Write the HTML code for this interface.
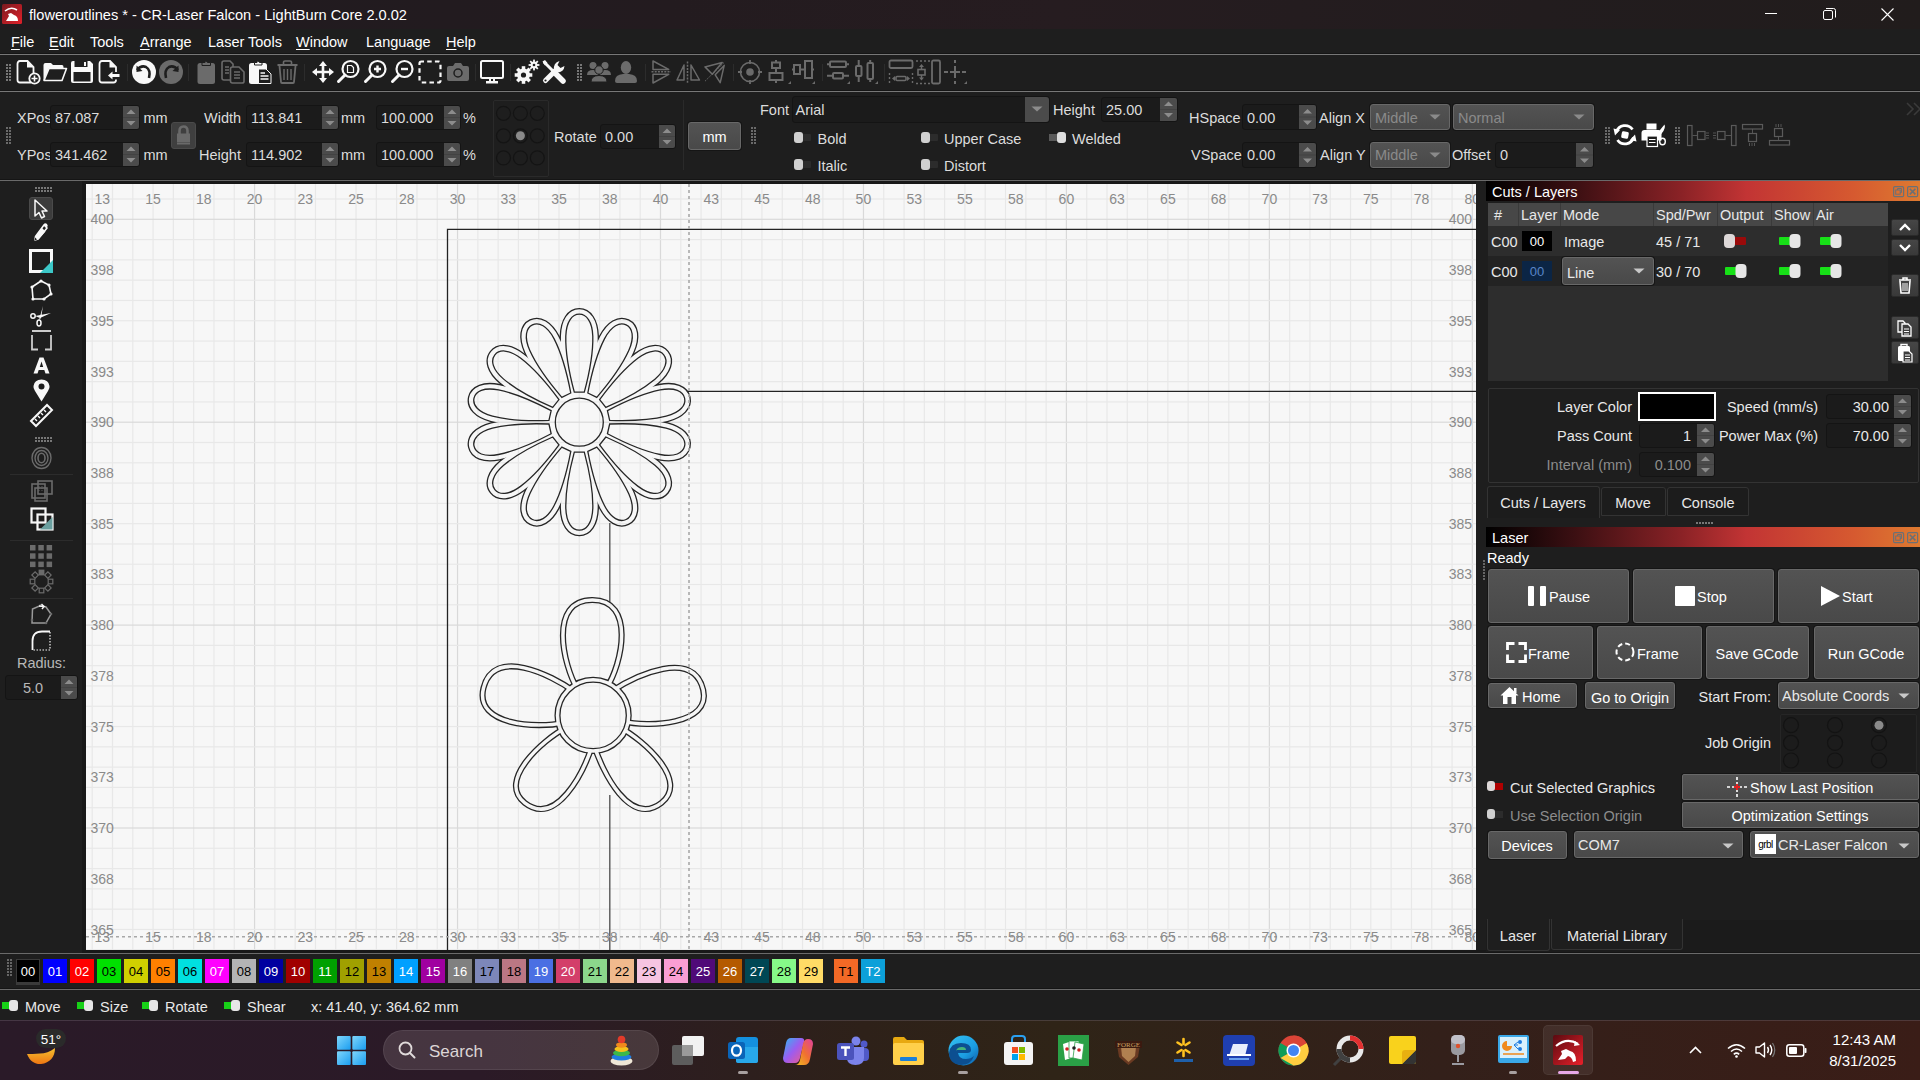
<!DOCTYPE html><html><head><meta charset="utf-8"><style>
html,body{margin:0;padding:0;width:1920px;height:1080px;overflow:hidden;background:#1e1e1e;font-family:"Liberation Sans",sans-serif;}
.a{position:absolute;box-sizing:border-box;}
svg.a{overflow:visible}
.t{position:absolute;white-space:nowrap;line-height:normal;}
u{text-decoration:underline;text-decoration-thickness:1px;text-underline-offset:1.5px;}
</style></head><body>
<div class="a" style="left:0px;top:0px;width:1920px;height:29px;background:linear-gradient(90deg,#201b1f 0%,#231b1f 35%,#261c20 55%,#221c1e 80%,#211c1c 100%)"></div>
<svg class="a" style="left:2px;top:4px;" width="20" height="20" viewBox="0 0 20 20"><defs><linearGradient id="ig" x1="0" y1="0" x2="1" y2="1"><stop offset="0" stop-color="#7a1a1f"/><stop offset="1" stop-color="#e0202a"/></linearGradient></defs><rect width="20" height="20" rx="1.5" fill="url(#ig)"/><path d="M3 7 Q9 2 15 6" stroke="#fff" stroke-width="1.6" fill="none"/><path d="M4 17 L7 12 L6 10 L9 9 L12 11 Q16 12 16 17 Z" fill="#fff"/></svg>
<div class="t" style="left:29.0px;top:6.8px;font-size:14.6px;color:#ffffff;">floweroutlines * - CR-Laser Falcon - LightBurn Core 2.0.02</div>
<svg class="a" style="left:1765px;top:13px;" width="12" height="1" viewBox="0 0 12 1"><rect width="12" height="1" fill="#fff"/></svg>
<svg class="a" style="left:1823px;top:8px;" width="13" height="13" viewBox="0 0 13 13"><rect x="0.5" y="2.5" width="9" height="9" rx="1.5" fill="none" stroke="#fff" stroke-width="1"/><path d="M3 0.5 H10.5 Q12.5 0.5 12.5 2.5 V9.5" fill="none" stroke="#fff" stroke-width="1"/></svg>
<svg class="a" style="left:1881px;top:8px;" width="13" height="13" viewBox="0 0 13 13"><path d="M0.5 0.5 L12.5 12.5 M12.5 0.5 L0.5 12.5" stroke="#fff" stroke-width="1.1"/></svg>
<div class="t" style="left:11.0px;top:33.9px;font-size:14.5px;color:#ffffff;"><u>F</u>ile</div>
<div class="t" style="left:49.0px;top:33.9px;font-size:14.5px;color:#ffffff;"><u>E</u>dit</div>
<div class="t" style="left:90.0px;top:33.9px;font-size:14.5px;color:#ffffff;">Tools</div>
<div class="t" style="left:140.0px;top:33.9px;font-size:14.5px;color:#ffffff;"><u>A</u>rrange</div>
<div class="t" style="left:208.0px;top:33.9px;font-size:14.5px;color:#ffffff;">Laser Tools</div>
<div class="t" style="left:296.0px;top:33.9px;font-size:14.5px;color:#ffffff;"><u>W</u>indow</div>
<div class="t" style="left:366.0px;top:33.9px;font-size:14.5px;color:#ffffff;">Language</div>
<div class="t" style="left:446.0px;top:33.9px;font-size:14.5px;color:#ffffff;"><u>H</u>elp</div>
<div class="a" style="left:0px;top:53px;width:1920px;height:1px;background:#151515"></div>
<div class="a" style="left:0px;top:54px;width:1920px;height:1px;background:#777"></div>
<div class="a" style="left:0px;top:90px;width:1920px;height:1px;background:#151515"></div>
<div class="a" style="left:0px;top:91px;width:1920px;height:1px;background:#777"></div>
<svg class="a" style="left:6px;top:64px;" width="6" height="18" viewBox="0 0 6 18"><rect x="0" y="0" width="2" height="2" fill="#777"/><rect x="3" y="0" width="2" height="2" fill="#777"/><rect x="0" y="3" width="2" height="2" fill="#777"/><rect x="3" y="3" width="2" height="2" fill="#777"/><rect x="0" y="6" width="2" height="2" fill="#777"/><rect x="3" y="6" width="2" height="2" fill="#777"/><rect x="0" y="9" width="2" height="2" fill="#777"/><rect x="3" y="9" width="2" height="2" fill="#777"/><rect x="0" y="12" width="2" height="2" fill="#777"/><rect x="3" y="12" width="2" height="2" fill="#777"/><rect x="0" y="15" width="2" height="2" fill="#777"/><rect x="3" y="15" width="2" height="2" fill="#777"/></svg>
<svg class="a" style="left:16px;top:60px;" width="24" height="24" viewBox="0 0 24 24"><path d="M1.5 4 Q1.5 1 4 1 H11.5 L17.5 7 V15 M15 22.5 H4 Q1.5 22.5 1.5 20 V4" fill="none" stroke="#f8f8f8" stroke-width="1.8"/><path d="M11 1 V7.5 H17.5 Z" fill="#f8f8f8"/><circle cx="18.5" cy="18.5" r="5.2" fill="#1e1e1e" stroke="#f8f8f8" stroke-width="1.8"/><path d="M18.5 15.5 V21.5 M15.5 18.5 H21.5" stroke="#f8f8f8" stroke-width="1.6"/></svg>
<svg class="a" style="left:43px;top:60px;" width="24" height="24" viewBox="0 0 24 24"><path d="M0.5 5 Q0.5 3 2.5 3 H8 L10 5 H19 Q20.5 5 20.5 7 V8 H6 L1 20 H0.5 Z" fill="#f8f8f8"/><path d="M6 8.5 H23.5 L19 20.5 H1 Z" fill="none" stroke="#f8f8f8" stroke-width="1.6" stroke-linejoin="round"/></svg>
<svg class="a" style="left:70px;top:60px;" width="24" height="24" viewBox="0 0 24 24"><path d="M1 3 Q1 1 3 1 H20 L23 4 V21 Q23 23 21 23 H3 Q1 23 1 21 Z" fill="#f8f8f8"/><rect x="4.5" y="1" width="13" height="6" fill="#1e1e1e"/><rect x="14" y="2" width="2" height="4" fill="#f8f8f8"/><rect x="3.5" y="12" width="17" height="9.5" fill="#1e1e1e"/></svg>
<svg class="a" style="left:98px;top:60px;" width="24" height="24" viewBox="0 0 24 24"><path d="M1.5 4 Q1.5 1 4 1 H12 L18 7 V12 M18 19.5 V20 Q18 22.5 15.5 22.5 H4 Q1.5 22.5 1.5 20 V4" fill="none" stroke="#f8f8f8" stroke-width="1.8"/><path d="M11.5 1 V7.5 H18 Z" fill="#f8f8f8"/><path d="M10 15.5 L14.5 11.5 V14 H21.5 V17 H14.5 V19.5 Z" fill="#f8f8f8"/></svg>
<div class="a" style="left:127px;top:64px;width:1px;height:17px;background:#2c2c2c"></div>
<svg class="a" style="left:132px;top:60px;" width="24" height="24" viewBox="0 0 24 24"><circle cx="12" cy="12" r="12" fill="#f8f8f8"/><path d="M5 10 Q9 5 14 7 Q19 10 17 18" fill="none" stroke="#1e1e1e" stroke-width="2.6"/><path d="M4.5 5.5 L4.5 12 L10.5 11 Z" fill="#1e1e1e"/></svg>
<svg class="a" style="left:159px;top:60px;" width="24" height="24" viewBox="0 0 24 24"><circle cx="12" cy="12" r="12" fill="#6b6b6b"/><path d="M19 10 Q15 5 10 7 Q5 10 7 18" fill="none" stroke="#1e1e1e" stroke-width="2.6"/><path d="M19.5 5.5 L19.5 12 L13.5 11 Z" fill="#1e1e1e"/></svg>
<div class="a" style="left:188px;top:64px;width:1px;height:17px;background:#2c2c2c"></div>
<svg class="a" style="left:197px;top:60px;" width="24" height="24" viewBox="0 0 24 24"><rect x="0.5" y="3" width="17.5" height="21" rx="2.5" fill="#6b6b6b"/><path d="M5 5.5 V2.5 H8 Q9 0 10.5 2.5 H13.5 V5.5 Z" fill="#6b6b6b" stroke="#1e1e1e" stroke-width="1"/></svg>
<svg class="a" style="left:221px;top:60px;" width="24" height="24" viewBox="0 0 24 24"><path d="M1 3 Q1 1 3 1 H9 L12 4 V7 M10 20 H3 Q1 20 1 18 V3" fill="none" stroke="#6b6b6b" stroke-width="1.6"/><path d="M9.5 9 Q9.5 7 11.5 7 H18 L23 12 V21.5 Q23 23 21 23 H11.5 Q9.5 23 9.5 21 Z" fill="none" stroke="#6b6b6b" stroke-width="1.6"/><path d="M4 7 H8 M4 10 H8 M4 13 H8 M13 12 H19 M13 15 H19 M13 18 H19" stroke="#6b6b6b" stroke-width="1.4"/></svg>
<svg class="a" style="left:249px;top:60px;" width="24" height="24" viewBox="0 0 24 24"><rect x="0" y="3" width="18" height="21" rx="2.5" fill="#f8f8f8"/><path d="M5.5 5 V2.5 H8 Q9 0 10.5 2.5 H13 V5 Z" fill="#f8f8f8" stroke="#1e1e1e" stroke-width="1"/><path d="M9.5 9 H17 L22 14 V23.5 H9.5 Z" fill="#1e1e1e" stroke="#f8f8f8" stroke-width="1"/><path d="M11.5 13 H16 M11.5 16 H19.5 M11.5 19 H19.5" stroke="#f8f8f8" stroke-width="1.4"/></svg>
<svg class="a" style="left:277px;top:60px;" width="24" height="24" viewBox="0 0 24 24"><path d="M0.5 5 H20.5" stroke="#6b6b6b" stroke-width="2"/><path d="M6.5 4.5 V2 Q6.5 1 8 1 H13 Q14.5 1 14.5 2 V4.5" fill="none" stroke="#6b6b6b" stroke-width="1.6"/><path d="M2.5 6 L4 22 Q4 23 5 23 H16 Q17 23 17 22 L18.5 6" fill="none" stroke="#6b6b6b" stroke-width="1.8"/><path d="M7 9 V20 M10.5 9 V20 M14 9 V20" stroke="#6b6b6b" stroke-width="1.4"/></svg>
<div class="a" style="left:304px;top:64px;width:1px;height:17px;background:#2c2c2c"></div>
<svg class="a" style="left:311px;top:60px;" width="24" height="24" viewBox="0 0 24 24"><path d="M12 1 L16 6 H13.3 V10.7 H18 V8 L23 12 L18 16 V13.3 H13.3 V18 H16 L12 23 L8 18 H10.7 V13.3 H6 V16 L1 12 L6 8 V10.7 H10.7 V6 H8 Z" fill="#f8f8f8"/></svg>
<svg class="a" style="left:337px;top:60px;" width="24" height="24" viewBox="0 0 24 24"><circle cx="13.5" cy="9" r="8" fill="none" stroke="#f8f8f8" stroke-width="2.2"/><path d="M8 15 L1.5 21.5" stroke="#f8f8f8" stroke-width="3" stroke-linecap="round"/><path d="M10.5 5.5 H14.5 L16.5 7.5 V12.5 H10.5 Z" fill="none" stroke="#f8f8f8" stroke-width="1.2"/></svg>
<svg class="a" style="left:364px;top:60px;" width="24" height="24" viewBox="0 0 24 24"><circle cx="13.5" cy="9" r="8" fill="none" stroke="#f8f8f8" stroke-width="2.2"/><path d="M8 15 L1.5 21.5" stroke="#f8f8f8" stroke-width="3" stroke-linecap="round"/><path d="M13.5 5.5 V12.5 M10 9 H17" stroke="#f8f8f8" stroke-width="2.4"/></svg>
<svg class="a" style="left:391px;top:60px;" width="24" height="24" viewBox="0 0 24 24"><circle cx="13.5" cy="9" r="8" fill="none" stroke="#f8f8f8" stroke-width="2.2"/><path d="M8 15 L1.5 21.5" stroke="#f8f8f8" stroke-width="3" stroke-linecap="round"/><path d="M10 9 H17" stroke="#f8f8f8" stroke-width="2.4"/></svg>
<svg class="a" style="left:418px;top:60px;" width="24" height="24" viewBox="0 0 24 24"><rect x="1.5" y="1.5" width="21" height="21" rx="2" fill="none" stroke="#f8f8f8" stroke-width="2.2" stroke-dasharray="4.5 3.2" stroke-dashoffset="2"/></svg>
<svg class="a" style="left:446px;top:60px;" width="24" height="24" viewBox="0 0 24 24"><path d="M1 8 Q1 6 3 6 H7 L9 3 H15 L17 6 H21 Q23 6 23 8 V19 Q23 21 21 21 H3 Q1 21 1 19 Z" fill="#6b6b6b"/><circle cx="12" cy="13" r="4" fill="none" stroke="#1e1e1e" stroke-width="1.5"/></svg>
<div class="a" style="left:475px;top:64px;width:1px;height:17px;background:#2c2c2c"></div>
<svg class="a" style="left:480px;top:60px;" width="24" height="24" viewBox="0 0 24 24"><rect x="1" y="1" width="22" height="17" rx="1.5" fill="none" stroke="#f8f8f8" stroke-width="2"/><path d="M10 18 V21 M14 18 V21" stroke="#f8f8f8" stroke-width="2"/><rect x="6" y="21" width="12" height="2.5" fill="#f8f8f8"/></svg>
<div class="a" style="left:510px;top:64px;width:1px;height:17px;background:#2c2c2c"></div>
<svg class="a" style="left:515px;top:60px;" width="24" height="24" viewBox="0 0 24 24"><rect x="6.75" y="6.2" width="3.5" height="7" fill="#f8f8f8" transform="rotate(0.0 8.5 15)"/><rect x="6.75" y="6.2" width="3.5" height="7" fill="#f8f8f8" transform="rotate(45.0 8.5 15)"/><rect x="6.75" y="6.2" width="3.5" height="7" fill="#f8f8f8" transform="rotate(90.0 8.5 15)"/><rect x="6.75" y="6.2" width="3.5" height="7" fill="#f8f8f8" transform="rotate(135.0 8.5 15)"/><rect x="6.75" y="6.2" width="3.5" height="7" fill="#f8f8f8" transform="rotate(180.0 8.5 15)"/><rect x="6.75" y="6.2" width="3.5" height="7" fill="#f8f8f8" transform="rotate(225.0 8.5 15)"/><rect x="6.75" y="6.2" width="3.5" height="7" fill="#f8f8f8" transform="rotate(270.0 8.5 15)"/><rect x="6.75" y="6.2" width="3.5" height="7" fill="#f8f8f8" transform="rotate(315.0 8.5 15)"/><circle cx="8.5" cy="15" r="6.5" fill="#f8f8f8"/><circle cx="8.5" cy="15" r="2.6" fill="#1e1e1e"/><rect x="18.1" y="-0.40000000000000013" width="1.8" height="3.6" fill="#f8f8f8" transform="rotate(0.0 19 5)"/><rect x="18.1" y="-0.40000000000000013" width="1.8" height="3.6" fill="#f8f8f8" transform="rotate(45.0 19 5)"/><rect x="18.1" y="-0.40000000000000013" width="1.8" height="3.6" fill="#f8f8f8" transform="rotate(90.0 19 5)"/><rect x="18.1" y="-0.40000000000000013" width="1.8" height="3.6" fill="#f8f8f8" transform="rotate(135.0 19 5)"/><rect x="18.1" y="-0.40000000000000013" width="1.8" height="3.6" fill="#f8f8f8" transform="rotate(180.0 19 5)"/><rect x="18.1" y="-0.40000000000000013" width="1.8" height="3.6" fill="#f8f8f8" transform="rotate(225.0 19 5)"/><rect x="18.1" y="-0.40000000000000013" width="1.8" height="3.6" fill="#f8f8f8" transform="rotate(270.0 19 5)"/><rect x="18.1" y="-0.40000000000000013" width="1.8" height="3.6" fill="#f8f8f8" transform="rotate(315.0 19 5)"/><circle cx="19" cy="5" r="3.4" fill="#f8f8f8"/><circle cx="19" cy="5" r="1.3" fill="#1e1e1e"/></svg>
<svg class="a" style="left:542px;top:60px;" width="24" height="24" viewBox="0 0 24 24"><path d="M2.5 2.5 L13 13" stroke="#f8f8f8" stroke-width="3" stroke-linecap="round"/><path d="M0.5 1.5 L3 0 L5.5 3 L3 5.5 Z" fill="#f8f8f8"/><path d="M12 12 L21 21" stroke="#f8f8f8" stroke-width="5.5" stroke-linecap="round"/><path d="M3.5 20.5 L14 10" stroke="#f8f8f8" stroke-width="5" stroke-linecap="round"/><path d="M12 10 Q11 3 17.5 1 L15.5 5 L18.5 8 L22.5 6 Q22 12 15 12.5 Z" fill="#f8f8f8"/><circle cx="3.5" cy="20.5" r="1.1" fill="#1e1e1e"/></svg>
<svg class="a" style="left:577px;top:64px;" width="6" height="18" viewBox="0 0 6 18"><rect x="0" y="0" width="2" height="2" fill="#777"/><rect x="3" y="0" width="2" height="2" fill="#777"/><rect x="0" y="3" width="2" height="2" fill="#777"/><rect x="3" y="3" width="2" height="2" fill="#777"/><rect x="0" y="6" width="2" height="2" fill="#777"/><rect x="3" y="6" width="2" height="2" fill="#777"/><rect x="0" y="9" width="2" height="2" fill="#777"/><rect x="3" y="9" width="2" height="2" fill="#777"/><rect x="0" y="12" width="2" height="2" fill="#777"/><rect x="3" y="12" width="2" height="2" fill="#777"/><rect x="0" y="15" width="2" height="2" fill="#777"/><rect x="3" y="15" width="2" height="2" fill="#777"/></svg>
<svg class="a" style="left:587px;top:60px;" width="24" height="24" viewBox="0 0 24 24"><circle cx="6" cy="5.5" r="3.5" fill="#6b6b6b"/><circle cx="18" cy="5.5" r="3.5" fill="#6b6b6b"/><path d="M0 15 Q0 10 6 10 Q10 10 11 13 L11 15 Z" fill="#6b6b6b"/><path d="M24 15 Q24 10 18 10 Q14 10 13 13 L13 15 Z" fill="#6b6b6b"/><circle cx="12" cy="10" r="4.2" fill="#6b6b6b" stroke="#1e1e1e" stroke-width="1"/><path d="M4 22 Q4 15.5 12 15.5 Q20 15.5 20 22 Z" fill="#6b6b6b" stroke="#1e1e1e" stroke-width="1"/></svg>
<svg class="a" style="left:615px;top:60px;" width="24" height="24" viewBox="0 0 24 24"><ellipse cx="11" cy="7.5" rx="5.2" ry="6.5" fill="#6b6b6b"/><path d="M0 21 Q0 14.5 8 14 H14 Q22 14.5 22 21 Q22 23 20 23 H2 Q0 23 0 21 Z" fill="#6b6b6b"/></svg>
<div class="a" style="left:645px;top:64px;width:1px;height:17px;background:#2c2c2c"></div>
<svg class="a" style="left:652px;top:60px;" width="24" height="24" viewBox="0 0 24 24"><path d="M1 1 L16.7 9.4 H1 Z M1 14.3 H16.7 L1 23 Z" fill="none" stroke="#6b6b6b" stroke-width="1.5" stroke-linejoin="round"/><path d="M-0.5 11.8 H19" stroke="#6b6b6b" stroke-width="1.5" stroke-dasharray="2 1.2"/></svg>
<svg class="a" style="left:677px;top:60px;" width="24" height="24" viewBox="0 0 24 24"><path d="M0 20 L7 5 V20 Z M14 5 V20 H22.5 Z" fill="none" stroke="#6b6b6b" stroke-width="1.5" stroke-linejoin="round"/><path d="M10.5 1.5 V23" stroke="#6b6b6b" stroke-width="1.5" stroke-dasharray="2 1.2"/></svg>
<svg class="a" style="left:705px;top:60px;" width="24" height="24" viewBox="0 0 24 24"><path d="M0 6.9 L17.2 2.4 L7.3 14.3 Z M19.2 5.4 L15.2 22.7 L10.2 14.8 Z" fill="none" stroke="#6b6b6b" stroke-width="1.5" stroke-linejoin="round"/><path d="M0 21.2 L19.7 1.9" stroke="#6b6b6b" stroke-width="0.9" stroke-dasharray="1.5 1"/></svg>
<div class="a" style="left:733px;top:64px;width:1px;height:17px;background:#2c2c2c"></div>
<svg class="a" style="left:738px;top:60px;" width="24" height="24" viewBox="0 0 24 24"><circle cx="12" cy="12" r="9.5" fill="none" stroke="#6b6b6b" stroke-width="1.6"/><circle cx="12" cy="12" r="3.8" fill="#6b6b6b"/><path d="M12 0 V4 M12 20 V24 M0 12 H4 M20 12 H24" stroke="#6b6b6b" stroke-width="1.8"/></svg>
<svg class="a" style="left:768px;top:60px;" width="24" height="24" viewBox="0 0 24 24"><rect x="4" y="2.5" width="8" height="5.5" fill="none" stroke="#6b6b6b" stroke-width="2"/><rect x="1.5" y="13" width="13" height="7" fill="none" stroke="#6b6b6b" stroke-width="2"/><path d="M8 0 V2.5 M8 8 V13 M8 20 V23" stroke="#6b6b6b" stroke-width="2"/><path d="M20 24 L23 21 V24 Z" fill="#6b6b6b"/></svg>
<svg class="a" style="left:792px;top:60px;" width="24" height="24" viewBox="0 0 24 24"><rect x="2" y="5" width="6" height="9" fill="none" stroke="#6b6b6b" stroke-width="2"/><rect x="13" y="1" width="7" height="17" fill="none" stroke="#6b6b6b" stroke-width="2"/><path d="M0 9.5 H2 M8 9.5 H13 M20 9.5 H22" stroke="#6b6b6b" stroke-width="2"/><path d="M20 24 L23 21 V24 Z" fill="#6b6b6b"/></svg>
<div class="a" style="left:822px;top:64px;width:1px;height:17px;background:#2c2c2c"></div>
<svg class="a" style="left:827px;top:60px;" width="24" height="24" viewBox="0 0 24 24"><rect x="3" y="1.5" width="16" height="5.5" rx="1" fill="none" stroke="#6b6b6b" stroke-width="2"/><rect x="6" y="13" width="10" height="5.5" rx="1" fill="none" stroke="#6b6b6b" stroke-width="2"/><path d="M0 4.2 H3 M19 4.2 H22 M0 15.7 H6 M16 15.7 H22" stroke="#6b6b6b" stroke-width="2"/><path d="M20 24 L23 21 V24 Z" fill="#6b6b6b"/></svg>
<svg class="a" style="left:855px;top:60px;" width="24" height="24" viewBox="0 0 24 24"><rect x="1" y="6" width="5.5" height="10" rx="1" fill="none" stroke="#6b6b6b" stroke-width="2"/><rect x="12.5" y="3" width="5.5" height="16" rx="1" fill="none" stroke="#6b6b6b" stroke-width="2"/><path d="M3.7 0 V6 M3.7 16 V22 M15.2 0 V3 M15.2 19 V22" stroke="#6b6b6b" stroke-width="2"/><path d="M20 24 L23 21 V24 Z" fill="#6b6b6b"/></svg>
<div class="a" style="left:884px;top:64px;width:1px;height:17px;background:#2c2c2c"></div>
<svg class="a" style="left:889px;top:60px;" width="24" height="24" viewBox="0 0 24 24"><rect x="0.5" y="0.5" width="23" height="7.5" rx="1.5" fill="none" stroke="#6b6b6b" stroke-width="1.8"/><path d="M0.5 13 V24 M23.5 13 V24" stroke="#6b6b6b" stroke-width="1.4" stroke-dasharray="2 2"/><path d="M3 18.5 L6 16 V21 Z M21 18.5 L18 16 V21 Z" fill="#6b6b6b"/><rect x="7" y="16.5" width="10" height="4" rx="1" fill="none" stroke="#6b6b6b" stroke-width="1.6"/></svg>
<svg class="a" style="left:916px;top:60px;" width="16" height="24" viewBox="0 0 16 24"><path d="M0 1 H16 M0 23.5 H16" stroke="#6b6b6b" stroke-width="1.4" stroke-dasharray="2 2"/><path d="M5.5 4 L3 7 H8 Z M5.5 20.5 L3 17.5 H8 Z" fill="#6b6b6b"/><path d="M5.5 6 V10 M5.5 15 V19" stroke="#6b6b6b" stroke-width="1.4"/><rect x="2" y="9.5" width="7" height="5.5" fill="none" stroke="#6b6b6b" stroke-width="1.6"/></svg>
<svg class="a" style="left:931px;top:60px;" width="10" height="24" viewBox="0 0 10 24"><rect x="1" y="0.5" width="8" height="23" rx="1.5" fill="none" stroke="#6b6b6b" stroke-width="1.8"/></svg>
<svg class="a" style="left:944px;top:60px;" width="24" height="24" viewBox="0 0 24 24"><path d="M11 0 V3 M11 6 V18 M11 21 V24 M0 12 H4 M6 12 H16 M18 12 H22" stroke="#6b6b6b" stroke-width="2"/><path d="M20 24 L23 21 V24 Z" fill="#6b6b6b"/></svg>
<div class="a" style="left:0px;top:92px;width:1920px;height:88px;background:#1e1e1e"></div>
<svg class="a" style="left:6px;top:127px;" width="6" height="18" viewBox="0 0 6 18"><rect x="0" y="0" width="2" height="2" fill="#6a6a6a"/><rect x="3" y="0" width="2" height="2" fill="#6a6a6a"/><rect x="0" y="3" width="2" height="2" fill="#6a6a6a"/><rect x="3" y="3" width="2" height="2" fill="#6a6a6a"/><rect x="0" y="6" width="2" height="2" fill="#6a6a6a"/><rect x="3" y="6" width="2" height="2" fill="#6a6a6a"/><rect x="0" y="9" width="2" height="2" fill="#6a6a6a"/><rect x="3" y="9" width="2" height="2" fill="#6a6a6a"/><rect x="0" y="12" width="2" height="2" fill="#6a6a6a"/><rect x="3" y="12" width="2" height="2" fill="#6a6a6a"/><rect x="0" y="15" width="2" height="2" fill="#6a6a6a"/><rect x="3" y="15" width="2" height="2" fill="#6a6a6a"/></svg>
<div class="t" style="left:17.0px;top:109.9px;font-size:14.5px;color:#dcdcdc;">XPos</div>
<div class="a" style="left:50px;top:105px;width:90px;height:25px;background:#1b1b1b;border:1px solid #141414;border-radius:3px"></div>
<svg class="a" style="left:123px;top:106px;" width="16" height="23" viewBox="0 0 16 23"><path d="M0 0 H14 Q16 0 16 2 V21 Q16 23 14 23 H0 Z" fill="#4b4b4b"/><rect x="0" y="11.0" width="16" height="1" fill="#424242"/><path d="M3.5 8.0 L8.0 3.5 L12.5 8.0 Z" fill="#8c8c8c"/><path d="M3.5 15.0 L8.0 19.5 L12.5 15.0 Z" fill="#8c8c8c"/></svg>
<div class="t" style="left:55.0px;top:109.9px;font-size:14.5px;color:#dcdcdc;">87.087</div>
<div class="t" style="left:17.0px;top:146.9px;font-size:14.5px;color:#dcdcdc;">YPos</div>
<div class="a" style="left:50px;top:142px;width:90px;height:25px;background:#1b1b1b;border:1px solid #141414;border-radius:3px"></div>
<svg class="a" style="left:123px;top:143px;" width="16" height="23" viewBox="0 0 16 23"><path d="M0 0 H14 Q16 0 16 2 V21 Q16 23 14 23 H0 Z" fill="#4b4b4b"/><rect x="0" y="11.0" width="16" height="1" fill="#424242"/><path d="M3.5 8.0 L8.0 3.5 L12.5 8.0 Z" fill="#8c8c8c"/><path d="M3.5 15.0 L8.0 19.5 L12.5 15.0 Z" fill="#8c8c8c"/></svg>
<div class="t" style="left:55.0px;top:146.9px;font-size:14.5px;color:#dcdcdc;">341.462</div>
<div class="t" style="left:143.5px;top:109.9px;font-size:14.5px;color:#dcdcdc;">mm</div>
<div class="t" style="left:143.5px;top:146.9px;font-size:14.5px;color:#dcdcdc;">mm</div>
<div class="a" style="left:171px;top:122px;width:25px;height:27px;background:#3f3f3f;border:1px solid #4a4a4a;border-radius:3px"></div>
<svg class="a" style="left:176px;top:125px;" width="15" height="21" viewBox="0 0 15 21"><path d="M3.5 9 V6 Q3.5 1.5 7.5 1.5 Q11.5 1.5 11.5 6 V9" fill="none" stroke="#6a6a6a" stroke-width="2.6"/><rect x="1" y="8.5" width="13" height="11" fill="#6a6a6a"/><rect x="1" y="17" width="13" height="1" fill="#555"/></svg>
<div class="t" style="left:204.0px;top:109.9px;font-size:14.5px;color:#dcdcdc;">Width</div>
<div class="a" style="left:246px;top:105px;width:93px;height:25px;background:#1b1b1b;border:1px solid #141414;border-radius:3px"></div>
<svg class="a" style="left:322px;top:106px;" width="16" height="23" viewBox="0 0 16 23"><path d="M0 0 H14 Q16 0 16 2 V21 Q16 23 14 23 H0 Z" fill="#4b4b4b"/><rect x="0" y="11.0" width="16" height="1" fill="#424242"/><path d="M3.5 8.0 L8.0 3.5 L12.5 8.0 Z" fill="#8c8c8c"/><path d="M3.5 15.0 L8.0 19.5 L12.5 15.0 Z" fill="#8c8c8c"/></svg>
<div class="t" style="left:251.0px;top:109.9px;font-size:14.5px;color:#dcdcdc;">113.841</div>
<div class="t" style="left:199.0px;top:146.9px;font-size:14.5px;color:#dcdcdc;">Height</div>
<div class="a" style="left:246px;top:142px;width:93px;height:25px;background:#1b1b1b;border:1px solid #141414;border-radius:3px"></div>
<svg class="a" style="left:322px;top:143px;" width="16" height="23" viewBox="0 0 16 23"><path d="M0 0 H14 Q16 0 16 2 V21 Q16 23 14 23 H0 Z" fill="#4b4b4b"/><rect x="0" y="11.0" width="16" height="1" fill="#424242"/><path d="M3.5 8.0 L8.0 3.5 L12.5 8.0 Z" fill="#8c8c8c"/><path d="M3.5 15.0 L8.0 19.5 L12.5 15.0 Z" fill="#8c8c8c"/></svg>
<div class="t" style="left:251.0px;top:146.9px;font-size:14.5px;color:#dcdcdc;">114.902</div>
<div class="t" style="left:341.0px;top:109.9px;font-size:14.5px;color:#dcdcdc;">mm</div>
<div class="t" style="left:341.0px;top:146.9px;font-size:14.5px;color:#dcdcdc;">mm</div>
<div class="a" style="left:376px;top:105px;width:85px;height:25px;background:#1b1b1b;border:1px solid #141414;border-radius:3px"></div>
<svg class="a" style="left:444px;top:106px;" width="16" height="23" viewBox="0 0 16 23"><path d="M0 0 H14 Q16 0 16 2 V21 Q16 23 14 23 H0 Z" fill="#4b4b4b"/><rect x="0" y="11.0" width="16" height="1" fill="#424242"/><path d="M3.5 8.0 L8.0 3.5 L12.5 8.0 Z" fill="#8c8c8c"/><path d="M3.5 15.0 L8.0 19.5 L12.5 15.0 Z" fill="#8c8c8c"/></svg>
<div class="t" style="left:381.0px;top:109.9px;font-size:14.5px;color:#dcdcdc;">100.000</div>
<div class="a" style="left:376px;top:142px;width:85px;height:25px;background:#1b1b1b;border:1px solid #141414;border-radius:3px"></div>
<svg class="a" style="left:444px;top:143px;" width="16" height="23" viewBox="0 0 16 23"><path d="M0 0 H14 Q16 0 16 2 V21 Q16 23 14 23 H0 Z" fill="#4b4b4b"/><rect x="0" y="11.0" width="16" height="1" fill="#424242"/><path d="M3.5 8.0 L8.0 3.5 L12.5 8.0 Z" fill="#8c8c8c"/><path d="M3.5 15.0 L8.0 19.5 L12.5 15.0 Z" fill="#8c8c8c"/></svg>
<div class="t" style="left:381.0px;top:146.9px;font-size:14.5px;color:#dcdcdc;">100.000</div>
<div class="t" style="left:463.0px;top:109.9px;font-size:14.5px;color:#dcdcdc;">%</div>
<div class="t" style="left:463.0px;top:146.9px;font-size:14.5px;color:#dcdcdc;">%</div>
<div class="a" style="left:493px;top:100px;width:56px;height:77px;border:1px solid #2a2a2a;border-radius:2px"></div>
<svg class="a" style="left:493px;top:100px;" width="56" height="77" viewBox="0 0 56 77"><circle cx="10.5" cy="13.3" r="7" fill="none" stroke="#141414" stroke-width="1.2"/><circle cx="10.5" cy="35.8" r="7" fill="none" stroke="#141414" stroke-width="1.2"/><circle cx="10.5" cy="57.9" r="7" fill="none" stroke="#141414" stroke-width="1.2"/><circle cx="27.4" cy="13.3" r="7" fill="none" stroke="#141414" stroke-width="1.2"/><circle cx="27.4" cy="35.8" r="7" fill="none" stroke="#141414" stroke-width="1.2"/><circle cx="27.4" cy="57.9" r="7" fill="none" stroke="#141414" stroke-width="1.2"/><circle cx="44.3" cy="13.3" r="7" fill="none" stroke="#141414" stroke-width="1.2"/><circle cx="44.3" cy="35.8" r="7" fill="none" stroke="#141414" stroke-width="1.2"/><circle cx="44.3" cy="57.9" r="7" fill="none" stroke="#141414" stroke-width="1.2"/><circle cx="27.4" cy="35.8" r="4.5" fill="#8a8a8a"/></svg>
<div class="t" style="left:554.0px;top:129.4px;font-size:14.5px;color:#dcdcdc;">Rotate</div>
<div class="a" style="left:600px;top:124px;width:76px;height:25px;background:#1b1b1b;border:1px solid #141414;border-radius:3px"></div>
<svg class="a" style="left:659px;top:125px;" width="16" height="23" viewBox="0 0 16 23"><path d="M0 0 H14 Q16 0 16 2 V21 Q16 23 14 23 H0 Z" fill="#4b4b4b"/><rect x="0" y="11.0" width="16" height="1" fill="#424242"/><path d="M3.5 8.0 L8.0 3.5 L12.5 8.0 Z" fill="#8c8c8c"/><path d="M3.5 15.0 L8.0 19.5 L12.5 15.0 Z" fill="#8c8c8c"/></svg>
<div class="t" style="left:605.0px;top:129.4px;font-size:14.5px;color:#dcdcdc;">0.00</div>
<div class="a" style="left:683px;top:100px;width:1px;height:70px;background:#2a2a2a"></div>
<div class="a" style="left:688px;top:122px;width:53px;height:28px;background:linear-gradient(#535353,#494949);border:1px solid #686868;border-radius:3px;box-shadow:0 0 0 1px #151515"></div>
<div class="t" style="left:689.5px;width:50px;text-align:center;top:128.9px;font-size:14.5px;color:#ffffff;">mm</div>
<svg class="a" style="left:751px;top:127px;" width="6" height="18" viewBox="0 0 6 18"><rect x="0" y="0" width="2" height="2" fill="#6a6a6a"/><rect x="3" y="0" width="2" height="2" fill="#6a6a6a"/><rect x="0" y="3" width="2" height="2" fill="#6a6a6a"/><rect x="3" y="3" width="2" height="2" fill="#6a6a6a"/><rect x="0" y="6" width="2" height="2" fill="#6a6a6a"/><rect x="3" y="6" width="2" height="2" fill="#6a6a6a"/><rect x="0" y="9" width="2" height="2" fill="#6a6a6a"/><rect x="3" y="9" width="2" height="2" fill="#6a6a6a"/><rect x="0" y="12" width="2" height="2" fill="#6a6a6a"/><rect x="3" y="12" width="2" height="2" fill="#6a6a6a"/><rect x="0" y="15" width="2" height="2" fill="#6a6a6a"/><rect x="3" y="15" width="2" height="2" fill="#6a6a6a"/></svg>
<div class="t" style="left:760.0px;top:101.9px;font-size:14.5px;color:#dcdcdc;">Font</div>
<div class="a" style="left:792px;top:96px;width:258px;height:27px;background:#1b1b1b;border:1px solid #141414;border-radius:3px"></div>
<div class="a" style="left:1025px;top:97px;width:24px;height:25px;background:#4b4b4b;border-radius:0 3px 3px 0"></div>
<svg class="a" style="left:1031px;top:106px;" width="12" height="6" viewBox="0 0 12 6"><path d="M0.5 0.5 L11.5 0.5 L6 5.5 Z" fill="#8c8c8c"/></svg>
<div class="t" style="left:795.5px;top:101.9px;font-size:14.5px;color:#dcdcdc;">Arial</div>
<div class="t" style="left:1053.0px;top:101.9px;font-size:14.5px;color:#dcdcdc;">Height</div>
<div class="a" style="left:1101px;top:97px;width:77px;height:25px;background:#1b1b1b;border:1px solid #141414;border-radius:3px"></div>
<svg class="a" style="left:1160px;top:98px;" width="17" height="23" viewBox="0 0 17 23"><path d="M0 0 H15 Q17 0 17 2 V21 Q17 23 15 23 H0 Z" fill="#4b4b4b"/><rect x="0" y="11.0" width="17" height="1" fill="#424242"/><path d="M4.0 8.0 L8.5 3.5 L13.0 8.0 Z" fill="#8c8c8c"/><path d="M4.0 15.0 L8.5 19.5 L13.0 15.0 Z" fill="#8c8c8c"/></svg>
<div class="t" style="left:1106.0px;top:101.9px;font-size:14.5px;color:#dcdcdc;">25.00</div>
<svg class="a" style="left:793.5px;top:131.5px;" width="18" height="11" viewBox="0 0 18 11"><rect x="6" y="2" width="11" height="7" rx="1" fill="#2c2c2c"/><rect x="0" y="0" width="9" height="11" rx="3" fill="#d0d0d0"/></svg>
<div class="t" style="left:817.5px;top:130.9px;font-size:14.5px;color:#dcdcdc;">Bold</div>
<svg class="a" style="left:793.5px;top:158.5px;" width="18" height="11" viewBox="0 0 18 11"><rect x="6" y="2" width="11" height="7" rx="1" fill="#2c2c2c"/><rect x="0" y="0" width="9" height="11" rx="3" fill="#d0d0d0"/></svg>
<div class="t" style="left:817.5px;top:157.9px;font-size:14.5px;color:#dcdcdc;">Italic</div>
<svg class="a" style="left:920.5px;top:131.5px;" width="18" height="11" viewBox="0 0 18 11"><rect x="6" y="2" width="11" height="7" rx="1" fill="#2c2c2c"/><rect x="0" y="0" width="9" height="11" rx="3" fill="#d0d0d0"/></svg>
<div class="t" style="left:944.0px;top:130.9px;font-size:14.5px;color:#dcdcdc;">Upper Case</div>
<svg class="a" style="left:920.5px;top:158.5px;" width="18" height="11" viewBox="0 0 18 11"><rect x="6" y="2" width="11" height="7" rx="1" fill="#2c2c2c"/><rect x="0" y="0" width="9" height="11" rx="3" fill="#d0d0d0"/></svg>
<div class="t" style="left:944.0px;top:157.9px;font-size:14.5px;color:#dcdcdc;">Distort</div>
<svg class="a" style="left:1049px;top:131.5px;" width="18" height="11" viewBox="0 0 18 11"><rect x="0" y="2" width="11" height="7" fill="#5a5a5a"/><rect x="8" y="0" width="9" height="11" rx="3" fill="#dedede"/></svg>
<div class="t" style="left:1072.0px;top:130.9px;font-size:14.5px;color:#dcdcdc;">Welded</div>
<div class="t" style="left:1189.0px;top:109.9px;font-size:14.5px;color:#dcdcdc;">HSpace</div>
<div class="a" style="left:1242px;top:104px;width:75px;height:26px;background:#1b1b1b;border:1px solid #141414;border-radius:3px"></div>
<svg class="a" style="left:1299px;top:105px;" width="17" height="24" viewBox="0 0 17 24"><path d="M0 0 H15 Q17 0 17 2 V22 Q17 24 15 24 H0 Z" fill="#4b4b4b"/><rect x="0" y="11.5" width="17" height="1" fill="#424242"/><path d="M4.0 8.5 L8.5 4.0 L13.0 8.5 Z" fill="#8c8c8c"/><path d="M4.0 15.5 L8.5 20.0 L13.0 15.5 Z" fill="#8c8c8c"/></svg>
<div class="t" style="left:1247.0px;top:109.9px;font-size:14.5px;color:#dcdcdc;">0.00</div>
<div class="t" style="left:1191.0px;top:146.9px;font-size:14.5px;color:#dcdcdc;">VSpace</div>
<div class="a" style="left:1242px;top:142px;width:75px;height:26px;background:#1b1b1b;border:1px solid #141414;border-radius:3px"></div>
<svg class="a" style="left:1299px;top:143px;" width="17" height="24" viewBox="0 0 17 24"><path d="M0 0 H15 Q17 0 17 2 V22 Q17 24 15 24 H0 Z" fill="#4b4b4b"/><rect x="0" y="11.5" width="17" height="1" fill="#424242"/><path d="M4.0 8.5 L8.5 4.0 L13.0 8.5 Z" fill="#8c8c8c"/><path d="M4.0 15.5 L8.5 20.0 L13.0 15.5 Z" fill="#8c8c8c"/></svg>
<div class="t" style="left:1247.0px;top:146.9px;font-size:14.5px;color:#dcdcdc;">0.00</div>
<div class="t" style="left:1319.0px;top:109.9px;font-size:14.5px;color:#dcdcdc;">Align X</div>
<div class="t" style="left:1320.0px;top:146.9px;font-size:14.5px;color:#dcdcdc;">Align Y</div>
<div class="a" style="left:1370px;top:104px;width:80px;height:26px;background:linear-gradient(#535353,#494949);border:1px solid #686868;border-radius:3px;box-shadow:0 0 0 1px #151515"></div>
<div class="t" style="left:1375.0px;top:109.9px;font-size:14.5px;color:#8a8a8a;">Middle</div>
<svg class="a" style="left:1429px;top:114.0px;" width="12" height="6" viewBox="0 0 12 6"><path d="M0.5 0.5 L11.5 0.5 L6 5.5 Z" fill="#8a8a8a"/></svg>
<div class="a" style="left:1370px;top:142px;width:80px;height:26px;background:linear-gradient(#535353,#494949);border:1px solid #686868;border-radius:3px;box-shadow:0 0 0 1px #151515"></div>
<div class="t" style="left:1375.0px;top:146.9px;font-size:14.5px;color:#8a8a8a;">Middle</div>
<svg class="a" style="left:1429px;top:152.0px;" width="12" height="6" viewBox="0 0 12 6"><path d="M0.5 0.5 L11.5 0.5 L6 5.5 Z" fill="#8a8a8a"/></svg>
<div class="a" style="left:1453px;top:104px;width:141px;height:26px;background:linear-gradient(#535353,#494949);border:1px solid #686868;border-radius:3px;box-shadow:0 0 0 1px #151515"></div>
<div class="t" style="left:1458.0px;top:109.9px;font-size:14.5px;color:#8a8a8a;">Normal</div>
<svg class="a" style="left:1573px;top:114.0px;" width="12" height="6" viewBox="0 0 12 6"><path d="M0.5 0.5 L11.5 0.5 L6 5.5 Z" fill="#8a8a8a"/></svg>
<div class="t" style="left:1452.0px;top:146.9px;font-size:14.5px;color:#dcdcdc;">Offset</div>
<div class="a" style="left:1495px;top:142px;width:99px;height:26px;background:#1b1b1b;border:1px solid #141414;border-radius:3px"></div>
<svg class="a" style="left:1576px;top:143px;" width="17" height="24" viewBox="0 0 17 24"><path d="M0 0 H15 Q17 0 17 2 V22 Q17 24 15 24 H0 Z" fill="#4b4b4b"/><rect x="0" y="11.5" width="17" height="1" fill="#424242"/><path d="M4.0 8.5 L8.5 4.0 L13.0 8.5 Z" fill="#8c8c8c"/><path d="M4.0 15.5 L8.5 20.0 L13.0 15.5 Z" fill="#8c8c8c"/></svg>
<div class="t" style="left:1500.0px;top:146.9px;font-size:14.5px;color:#dcdcdc;">0</div>
<svg class="a" style="left:1605px;top:127px;" width="6" height="18" viewBox="0 0 6 18"><rect x="0" y="0" width="2" height="2" fill="#6a6a6a"/><rect x="3" y="0" width="2" height="2" fill="#6a6a6a"/><rect x="0" y="3" width="2" height="2" fill="#6a6a6a"/><rect x="3" y="3" width="2" height="2" fill="#6a6a6a"/><rect x="0" y="6" width="2" height="2" fill="#6a6a6a"/><rect x="3" y="6" width="2" height="2" fill="#6a6a6a"/><rect x="0" y="9" width="2" height="2" fill="#6a6a6a"/><rect x="3" y="9" width="2" height="2" fill="#6a6a6a"/><rect x="0" y="12" width="2" height="2" fill="#6a6a6a"/><rect x="3" y="12" width="2" height="2" fill="#6a6a6a"/><rect x="0" y="15" width="2" height="2" fill="#6a6a6a"/><rect x="3" y="15" width="2" height="2" fill="#6a6a6a"/></svg>
<svg class="a" style="left:1613px;top:123px;" width="24" height="24" viewBox="0 0 24 24"><path d="M3.5 9 A9 9 0 0 1 19.5 6.5" fill="none" stroke="#fff" stroke-width="2.8"/><path d="M20.5 14.5 A9 9 0 0 1 4.5 17" fill="none" stroke="#fff" stroke-width="2.8"/><path d="M0.5 5.5 L7 7 L2 12.5 Z M23.5 18.5 L17 17 L22 11.5 Z" fill="#fff"/><rect x="8.5" y="8.5" width="7" height="7" rx="1.5" fill="#fff" transform="rotate(10 12 12)"/></svg>
<svg class="a" style="left:1641px;top:122px;" width="26" height="26" viewBox="0 0 26 26"><rect x="5.5" y="1.5" width="10" height="6" fill="#fff"/><path d="M0.5 11 Q0.5 8 3.5 8 H17.5 Q20.5 8 20.5 11 V18.5 H0.5 Z" fill="#fff"/><rect x="6" y="14" width="10.5" height="10.5" fill="#1e1e1e" stroke="#fff" stroke-width="1.2"/><path d="M8 17.5 H14.5 M8 20.5 H14.5" stroke="#fff" stroke-width="1.2"/><path d="M23.5 2.5 Q25 6 21 11 L18 15 Q17 11 19 8 Z" fill="#fff"/><ellipse cx="21.5" cy="19.5" rx="2.8" ry="3.2" fill="none" stroke="#fff" stroke-width="1.4"/></svg>
<svg class="a" style="left:1675px;top:127px;" width="6" height="18" viewBox="0 0 6 18"><rect x="0" y="0" width="2" height="2" fill="#6a6a6a"/><rect x="3" y="0" width="2" height="2" fill="#6a6a6a"/><rect x="0" y="3" width="2" height="2" fill="#6a6a6a"/><rect x="3" y="3" width="2" height="2" fill="#6a6a6a"/><rect x="0" y="6" width="2" height="2" fill="#6a6a6a"/><rect x="3" y="6" width="2" height="2" fill="#6a6a6a"/><rect x="0" y="9" width="2" height="2" fill="#6a6a6a"/><rect x="3" y="9" width="2" height="2" fill="#6a6a6a"/><rect x="0" y="12" width="2" height="2" fill="#6a6a6a"/><rect x="3" y="12" width="2" height="2" fill="#6a6a6a"/><rect x="0" y="15" width="2" height="2" fill="#6a6a6a"/><rect x="3" y="15" width="2" height="2" fill="#6a6a6a"/></svg>
<svg class="a" style="left:1686px;top:123px;" width="106" height="26" viewBox="0 0 106 26"><rect x="1.5" y="2.5" width="4.5" height="20" fill="none" stroke="#5a5a5a" stroke-width="1.2"/><rect x="11.5" y="8.5" width="7.5" height="8" fill="none" stroke="#5a5a5a" stroke-width="1.2"/><path d="M6.5 12.5 H11 M20 10 H23 M20 12.5 H23 M20 15 H23" stroke="#5a5a5a" stroke-width="0.9"/><rect x="31.5" y="8.5" width="7.5" height="8" fill="none" stroke="#5a5a5a" stroke-width="1.2"/><rect x="45.5" y="2.5" width="4.5" height="20" fill="none" stroke="#5a5a5a" stroke-width="1.2"/><path d="M39.5 12.5 H45 M27 10 H30 M27 12.5 H30 M27 15 H30" stroke="#5a5a5a" stroke-width="0.9"/><rect x="56.5" y="1.5" width="20" height="4.5" fill="none" stroke="#5a5a5a" stroke-width="1.2"/><rect x="62.5" y="10.5" width="8" height="8" fill="none" stroke="#5a5a5a" stroke-width="1.2"/><path d="M66.5 6 V10.5 M63.5 20 V23 M66 20 V23 M68.5 20 V23" stroke="#5a5a5a" stroke-width="0.9"/><rect x="83.5" y="17.5" width="20" height="4.5" fill="none" stroke="#5a5a5a" stroke-width="1.2"/><rect x="88.5" y="5.5" width="8" height="8" fill="none" stroke="#5a5a5a" stroke-width="1.2"/><path d="M92.5 13.5 V17.5 M90 1 V4 M92.5 1 V4 M95 1 V4" stroke="#5a5a5a" stroke-width="0.9"/></svg>
<svg class="a" style="left:1906px;top:102px;" width="16" height="14" viewBox="0 0 16 14"><path d="M1 1 L7 7 L1 13 M8 1 L14 7 L8 13" fill="none" stroke="#3a3a3a" stroke-width="1.6"/></svg>
<div class="a" style="left:0px;top:179px;width:1920px;height:1px;background:#151515"></div>
<div class="a" style="left:0px;top:180px;width:1920px;height:1px;background:#6a6a6a"></div>
<div class="a" style="left:82px;top:181px;width:4px;height:769px;background:#181818"></div>
<div class="a" style="left:1476px;top:181px;width:10px;height:772px;background:#1e1e1e"></div>
<div class="a" style="left:86px;top:181px;width:1390px;height:3px;background:#181818"></div>
<div class="a" style="left:82px;top:950px;width:1404px;height:3px;background:#181818"></div>
<svg class="a" style="left:86px;top:184px;overflow:hidden" width="1390" height="766" viewBox="0 0 1390 766"><rect width="1390" height="766" fill="#f7f7f7"/><rect x="5.60" y="0" width="1.2" height="766" fill="#e8e8e8"/><rect x="25.90" y="0" width="1.2" height="766" fill="#e8e8e8"/><rect x="46.19" y="0" width="1.2" height="766" fill="#e8e8e8"/><rect x="66.49" y="0" width="1.2" height="766" fill="#e8e8e8"/><rect x="86.78" y="0" width="1.2" height="766" fill="#e8e8e8"/><rect x="107.08" y="0" width="1.2" height="766" fill="#e8e8e8"/><rect x="127.38" y="0" width="1.2" height="766" fill="#e8e8e8"/><rect x="147.67" y="0" width="1.2" height="766" fill="#e8e8e8"/><rect x="167.97" y="0" width="1.2" height="766" fill="#d9d9d9"/><rect x="188.26" y="0" width="1.2" height="766" fill="#e8e8e8"/><rect x="208.56" y="0" width="1.2" height="766" fill="#e8e8e8"/><rect x="228.86" y="0" width="1.2" height="766" fill="#e8e8e8"/><rect x="249.15" y="0" width="1.2" height="766" fill="#e8e8e8"/><rect x="269.45" y="0" width="1.2" height="766" fill="#e8e8e8"/><rect x="289.74" y="0" width="1.2" height="766" fill="#e8e8e8"/><rect x="310.04" y="0" width="1.2" height="766" fill="#e8e8e8"/><rect x="330.34" y="0" width="1.2" height="766" fill="#e8e8e8"/><rect x="350.63" y="0" width="1.2" height="766" fill="#e8e8e8"/><rect x="370.93" y="0" width="1.2" height="766" fill="#d9d9d9"/><rect x="391.22" y="0" width="1.2" height="766" fill="#e8e8e8"/><rect x="411.52" y="0" width="1.2" height="766" fill="#e8e8e8"/><rect x="431.82" y="0" width="1.2" height="766" fill="#e8e8e8"/><rect x="452.11" y="0" width="1.2" height="766" fill="#e8e8e8"/><rect x="472.41" y="0" width="1.2" height="766" fill="#e8e8e8"/><rect x="492.70" y="0" width="1.2" height="766" fill="#e8e8e8"/><rect x="513.00" y="0" width="1.2" height="766" fill="#e8e8e8"/><rect x="533.30" y="0" width="1.2" height="766" fill="#e8e8e8"/><rect x="553.59" y="0" width="1.2" height="766" fill="#e8e8e8"/><rect x="573.89" y="0" width="1.2" height="766" fill="#d9d9d9"/><rect x="594.18" y="0" width="1.2" height="766" fill="#e8e8e8"/><rect x="614.48" y="0" width="1.2" height="766" fill="#e8e8e8"/><rect x="634.78" y="0" width="1.2" height="766" fill="#e8e8e8"/><rect x="655.07" y="0" width="1.2" height="766" fill="#e8e8e8"/><rect x="675.37" y="0" width="1.2" height="766" fill="#e8e8e8"/><rect x="695.66" y="0" width="1.2" height="766" fill="#e8e8e8"/><rect x="715.96" y="0" width="1.2" height="766" fill="#e8e8e8"/><rect x="736.26" y="0" width="1.2" height="766" fill="#e8e8e8"/><rect x="756.55" y="0" width="1.2" height="766" fill="#e8e8e8"/><rect x="776.85" y="0" width="1.2" height="766" fill="#d9d9d9"/><rect x="797.14" y="0" width="1.2" height="766" fill="#e8e8e8"/><rect x="817.44" y="0" width="1.2" height="766" fill="#e8e8e8"/><rect x="837.74" y="0" width="1.2" height="766" fill="#e8e8e8"/><rect x="858.03" y="0" width="1.2" height="766" fill="#e8e8e8"/><rect x="878.33" y="0" width="1.2" height="766" fill="#e8e8e8"/><rect x="898.62" y="0" width="1.2" height="766" fill="#e8e8e8"/><rect x="918.92" y="0" width="1.2" height="766" fill="#e8e8e8"/><rect x="939.22" y="0" width="1.2" height="766" fill="#e8e8e8"/><rect x="959.51" y="0" width="1.2" height="766" fill="#e8e8e8"/><rect x="979.81" y="0" width="1.2" height="766" fill="#d9d9d9"/><rect x="1000.10" y="0" width="1.2" height="766" fill="#e8e8e8"/><rect x="1020.40" y="0" width="1.2" height="766" fill="#e8e8e8"/><rect x="1040.70" y="0" width="1.2" height="766" fill="#e8e8e8"/><rect x="1060.99" y="0" width="1.2" height="766" fill="#e8e8e8"/><rect x="1081.29" y="0" width="1.2" height="766" fill="#e8e8e8"/><rect x="1101.58" y="0" width="1.2" height="766" fill="#e8e8e8"/><rect x="1121.88" y="0" width="1.2" height="766" fill="#e8e8e8"/><rect x="1142.18" y="0" width="1.2" height="766" fill="#e8e8e8"/><rect x="1162.47" y="0" width="1.2" height="766" fill="#e8e8e8"/><rect x="1182.77" y="0" width="1.2" height="766" fill="#d9d9d9"/><rect x="1203.06" y="0" width="1.2" height="766" fill="#e8e8e8"/><rect x="1223.36" y="0" width="1.2" height="766" fill="#e8e8e8"/><rect x="1243.66" y="0" width="1.2" height="766" fill="#e8e8e8"/><rect x="1263.95" y="0" width="1.2" height="766" fill="#e8e8e8"/><rect x="1284.25" y="0" width="1.2" height="766" fill="#e8e8e8"/><rect x="1304.54" y="0" width="1.2" height="766" fill="#e8e8e8"/><rect x="1324.84" y="0" width="1.2" height="766" fill="#e8e8e8"/><rect x="1345.14" y="0" width="1.2" height="766" fill="#e8e8e8"/><rect x="1365.43" y="0" width="1.2" height="766" fill="#e8e8e8"/><rect x="1385.73" y="0" width="1.2" height="766" fill="#d9d9d9"/><rect x="0" y="765.14" width="1390" height="1.2" fill="#e8e8e8"/><rect x="0" y="744.85" width="1390" height="1.2" fill="#e8e8e8"/><rect x="0" y="724.56" width="1390" height="1.2" fill="#e8e8e8"/><rect x="0" y="704.27" width="1390" height="1.2" fill="#e8e8e8"/><rect x="0" y="683.98" width="1390" height="1.2" fill="#e8e8e8"/><rect x="0" y="663.69" width="1390" height="1.2" fill="#e8e8e8"/><rect x="0" y="643.40" width="1390" height="1.2" fill="#d9d9d9"/><rect x="0" y="623.11" width="1390" height="1.2" fill="#e8e8e8"/><rect x="0" y="602.82" width="1390" height="1.2" fill="#e8e8e8"/><rect x="0" y="582.53" width="1390" height="1.2" fill="#e8e8e8"/><rect x="0" y="562.24" width="1390" height="1.2" fill="#e8e8e8"/><rect x="0" y="541.95" width="1390" height="1.2" fill="#e8e8e8"/><rect x="0" y="521.66" width="1390" height="1.2" fill="#e8e8e8"/><rect x="0" y="501.37" width="1390" height="1.2" fill="#e8e8e8"/><rect x="0" y="481.08" width="1390" height="1.2" fill="#e8e8e8"/><rect x="0" y="460.79" width="1390" height="1.2" fill="#e8e8e8"/><rect x="0" y="440.50" width="1390" height="1.2" fill="#d9d9d9"/><rect x="0" y="420.21" width="1390" height="1.2" fill="#e8e8e8"/><rect x="0" y="399.92" width="1390" height="1.2" fill="#e8e8e8"/><rect x="0" y="379.63" width="1390" height="1.2" fill="#e8e8e8"/><rect x="0" y="359.34" width="1390" height="1.2" fill="#e8e8e8"/><rect x="0" y="339.05" width="1390" height="1.2" fill="#e8e8e8"/><rect x="0" y="318.76" width="1390" height="1.2" fill="#e8e8e8"/><rect x="0" y="298.47" width="1390" height="1.2" fill="#e8e8e8"/><rect x="0" y="278.18" width="1390" height="1.2" fill="#e8e8e8"/><rect x="0" y="257.89" width="1390" height="1.2" fill="#e8e8e8"/><rect x="0" y="237.60" width="1390" height="1.2" fill="#d9d9d9"/><rect x="0" y="217.31" width="1390" height="1.2" fill="#e8e8e8"/><rect x="0" y="197.02" width="1390" height="1.2" fill="#e8e8e8"/><rect x="0" y="176.73" width="1390" height="1.2" fill="#e8e8e8"/><rect x="0" y="156.44" width="1390" height="1.2" fill="#e8e8e8"/><rect x="0" y="136.15" width="1390" height="1.2" fill="#e8e8e8"/><rect x="0" y="115.86" width="1390" height="1.2" fill="#e8e8e8"/><rect x="0" y="95.57" width="1390" height="1.2" fill="#e8e8e8"/><rect x="0" y="75.28" width="1390" height="1.2" fill="#e8e8e8"/><rect x="0" y="54.99" width="1390" height="1.2" fill="#e8e8e8"/><rect x="0" y="34.70" width="1390" height="1.2" fill="#d9d9d9"/><rect x="0" y="14.41" width="1390" height="1.2" fill="#e8e8e8"/><g id="stem"></g><path d="M361.5 766 V45.30000000000001 H1390" fill="none" stroke="#222" stroke-width="1.3"/><path d="M601.4 207.3 H1390" fill="none" stroke="#222" stroke-width="1.3"/><path d="M523.8 339 V418 M523.8 611 V766" stroke="#585858" stroke-width="1.4"/><defs><mask id="m1" maskUnits="userSpaceOnUse" x="0" y="0" width="1390" height="766"><rect width="1390" height="766" fill="#fff"/><path d="M488.30 208.20 L498.30 208.20 C502.30 193.20 507.30 172.20 506.80 152.20 C506.30 137.20 500.30 130.20 493.30 130.20 C486.30 130.20 480.30 137.20 479.80 152.20 C479.30 172.20 484.30 193.20 488.30 208.20 Z" fill="#000" stroke="#000" stroke-width="9.7" stroke-linejoin="round"/><path d="M501.81 209.00 L510.82 213.34 C520.93 201.56 534.55 184.81 542.78 166.57 C548.83 152.84 546.47 143.93 540.16 140.90 C533.85 137.86 525.41 141.56 518.45 154.86 C509.32 172.66 504.72 193.75 501.81 209.00 Z" fill="#000" stroke="#000" stroke-width="9.7" stroke-linejoin="round"/><path d="M513.64 215.59 L519.87 223.40 C534.09 217.18 553.63 208.00 568.95 195.13 C580.37 185.39 582.10 176.34 577.74 170.86 C573.37 165.39 564.16 165.06 552.12 174.03 C536.17 186.10 522.87 203.11 513.64 215.59 Z" fill="#000" stroke="#000" stroke-width="9.7" stroke-linejoin="round"/><path d="M521.44 226.65 L523.66 236.40 C539.17 236.96 560.76 237.16 580.15 232.22 C594.66 228.40 600.15 220.99 598.59 214.17 C597.03 207.34 588.87 203.05 574.14 205.90 C554.53 209.86 535.17 219.41 521.44 226.65 Z" fill="#000" stroke="#000" stroke-width="9.7" stroke-linejoin="round"/><path d="M523.66 240.00 L521.44 249.75 C535.17 256.99 554.53 266.54 574.14 270.50 C588.87 273.35 597.03 269.06 598.59 262.23 C600.15 255.41 594.66 248.00 580.15 244.18 C560.76 239.24 539.17 239.44 523.66 240.00 Z" fill="#000" stroke="#000" stroke-width="9.7" stroke-linejoin="round"/><path d="M519.87 253.00 L513.64 260.81 C522.87 273.29 536.17 290.30 552.12 302.37 C564.16 311.34 573.37 311.01 577.74 305.54 C582.10 300.06 580.37 291.01 568.95 281.27 C553.63 268.40 534.09 259.22 519.87 253.00 Z" fill="#000" stroke="#000" stroke-width="9.7" stroke-linejoin="round"/><path d="M510.82 263.06 L501.81 267.40 C504.72 282.65 509.32 303.74 518.45 321.54 C525.41 334.84 533.85 338.54 540.16 335.50 C546.47 332.47 548.83 323.56 542.78 309.83 C534.55 291.59 520.93 274.84 510.82 263.06 Z" fill="#000" stroke="#000" stroke-width="9.7" stroke-linejoin="round"/><path d="M498.30 268.20 L488.30 268.20 C484.30 283.20 479.30 304.20 479.80 324.20 C480.30 339.20 486.30 346.20 493.30 346.20 C500.30 346.20 506.30 339.20 506.80 324.20 C507.30 304.20 502.30 283.20 498.30 268.20 Z" fill="#000" stroke="#000" stroke-width="9.7" stroke-linejoin="round"/><path d="M484.79 267.40 L475.78 263.06 C465.67 274.84 452.05 291.59 443.82 309.83 C437.77 323.56 440.13 332.47 446.44 335.50 C452.75 338.54 461.19 334.84 468.15 321.54 C477.28 303.74 481.88 282.65 484.79 267.40 Z" fill="#000" stroke="#000" stroke-width="9.7" stroke-linejoin="round"/><path d="M472.96 260.81 L466.73 253.00 C452.51 259.22 432.97 268.40 417.65 281.27 C406.23 291.01 404.50 300.06 408.86 305.54 C413.23 311.01 422.44 311.34 434.48 302.37 C450.43 290.30 463.73 273.29 472.96 260.81 Z" fill="#000" stroke="#000" stroke-width="9.7" stroke-linejoin="round"/><path d="M465.16 249.75 L462.94 240.00 C447.43 239.44 425.84 239.24 406.45 244.18 C391.94 248.00 386.45 255.41 388.01 262.23 C389.57 269.06 397.73 273.35 412.46 270.50 C432.07 266.54 451.43 256.99 465.16 249.75 Z" fill="#000" stroke="#000" stroke-width="9.7" stroke-linejoin="round"/><path d="M462.94 236.40 L465.16 226.65 C451.43 219.41 432.07 209.86 412.46 205.90 C397.73 203.05 389.57 207.34 388.01 214.17 C386.45 220.99 391.94 228.40 406.45 232.22 C425.84 237.16 447.43 236.96 462.94 236.40 Z" fill="#000" stroke="#000" stroke-width="9.7" stroke-linejoin="round"/><path d="M466.73 223.40 L472.96 215.59 C463.73 203.11 450.43 186.10 434.48 174.03 C422.44 165.06 413.23 165.39 408.86 170.86 C404.50 176.34 406.23 185.39 417.65 195.13 C432.97 208.00 452.51 217.18 466.73 223.40 Z" fill="#000" stroke="#000" stroke-width="9.7" stroke-linejoin="round"/><path d="M475.78 213.34 L484.79 209.00 C481.88 193.75 477.28 172.66 468.15 154.86 C461.19 141.56 452.75 137.86 446.44 140.90 C440.13 143.93 437.77 152.84 443.82 166.57 C452.05 184.81 465.67 201.56 475.78 213.34 Z" fill="#000" stroke="#000" stroke-width="9.7" stroke-linejoin="round"/><circle cx="493.29999999999995" cy="238.2" r="40" fill="#000"/></mask></defs><g mask="url(#m1)"><path d="M488.30 208.20 L498.30 208.20 C502.30 193.20 507.30 172.20 506.80 152.20 C506.30 137.20 500.30 130.20 493.30 130.20 C486.30 130.20 480.30 137.20 479.80 152.20 C479.30 172.20 484.30 193.20 488.30 208.20 Z" fill="#262626" stroke="#262626" stroke-width="12.3" stroke-linejoin="round"/><path d="M501.81 209.00 L510.82 213.34 C520.93 201.56 534.55 184.81 542.78 166.57 C548.83 152.84 546.47 143.93 540.16 140.90 C533.85 137.86 525.41 141.56 518.45 154.86 C509.32 172.66 504.72 193.75 501.81 209.00 Z" fill="#262626" stroke="#262626" stroke-width="12.3" stroke-linejoin="round"/><path d="M513.64 215.59 L519.87 223.40 C534.09 217.18 553.63 208.00 568.95 195.13 C580.37 185.39 582.10 176.34 577.74 170.86 C573.37 165.39 564.16 165.06 552.12 174.03 C536.17 186.10 522.87 203.11 513.64 215.59 Z" fill="#262626" stroke="#262626" stroke-width="12.3" stroke-linejoin="round"/><path d="M521.44 226.65 L523.66 236.40 C539.17 236.96 560.76 237.16 580.15 232.22 C594.66 228.40 600.15 220.99 598.59 214.17 C597.03 207.34 588.87 203.05 574.14 205.90 C554.53 209.86 535.17 219.41 521.44 226.65 Z" fill="#262626" stroke="#262626" stroke-width="12.3" stroke-linejoin="round"/><path d="M523.66 240.00 L521.44 249.75 C535.17 256.99 554.53 266.54 574.14 270.50 C588.87 273.35 597.03 269.06 598.59 262.23 C600.15 255.41 594.66 248.00 580.15 244.18 C560.76 239.24 539.17 239.44 523.66 240.00 Z" fill="#262626" stroke="#262626" stroke-width="12.3" stroke-linejoin="round"/><path d="M519.87 253.00 L513.64 260.81 C522.87 273.29 536.17 290.30 552.12 302.37 C564.16 311.34 573.37 311.01 577.74 305.54 C582.10 300.06 580.37 291.01 568.95 281.27 C553.63 268.40 534.09 259.22 519.87 253.00 Z" fill="#262626" stroke="#262626" stroke-width="12.3" stroke-linejoin="round"/><path d="M510.82 263.06 L501.81 267.40 C504.72 282.65 509.32 303.74 518.45 321.54 C525.41 334.84 533.85 338.54 540.16 335.50 C546.47 332.47 548.83 323.56 542.78 309.83 C534.55 291.59 520.93 274.84 510.82 263.06 Z" fill="#262626" stroke="#262626" stroke-width="12.3" stroke-linejoin="round"/><path d="M498.30 268.20 L488.30 268.20 C484.30 283.20 479.30 304.20 479.80 324.20 C480.30 339.20 486.30 346.20 493.30 346.20 C500.30 346.20 506.30 339.20 506.80 324.20 C507.30 304.20 502.30 283.20 498.30 268.20 Z" fill="#262626" stroke="#262626" stroke-width="12.3" stroke-linejoin="round"/><path d="M484.79 267.40 L475.78 263.06 C465.67 274.84 452.05 291.59 443.82 309.83 C437.77 323.56 440.13 332.47 446.44 335.50 C452.75 338.54 461.19 334.84 468.15 321.54 C477.28 303.74 481.88 282.65 484.79 267.40 Z" fill="#262626" stroke="#262626" stroke-width="12.3" stroke-linejoin="round"/><path d="M472.96 260.81 L466.73 253.00 C452.51 259.22 432.97 268.40 417.65 281.27 C406.23 291.01 404.50 300.06 408.86 305.54 C413.23 311.01 422.44 311.34 434.48 302.37 C450.43 290.30 463.73 273.29 472.96 260.81 Z" fill="#262626" stroke="#262626" stroke-width="12.3" stroke-linejoin="round"/><path d="M465.16 249.75 L462.94 240.00 C447.43 239.44 425.84 239.24 406.45 244.18 C391.94 248.00 386.45 255.41 388.01 262.23 C389.57 269.06 397.73 273.35 412.46 270.50 C432.07 266.54 451.43 256.99 465.16 249.75 Z" fill="#262626" stroke="#262626" stroke-width="12.3" stroke-linejoin="round"/><path d="M462.94 236.40 L465.16 226.65 C451.43 219.41 432.07 209.86 412.46 205.90 C397.73 203.05 389.57 207.34 388.01 214.17 C386.45 220.99 391.94 228.40 406.45 232.22 C425.84 237.16 447.43 236.96 462.94 236.40 Z" fill="#262626" stroke="#262626" stroke-width="12.3" stroke-linejoin="round"/><path d="M466.73 223.40 L472.96 215.59 C463.73 203.11 450.43 186.10 434.48 174.03 C422.44 165.06 413.23 165.39 408.86 170.86 C404.50 176.34 406.23 185.39 417.65 195.13 C432.97 208.00 452.51 217.18 466.73 223.40 Z" fill="#262626" stroke="#262626" stroke-width="12.3" stroke-linejoin="round"/><path d="M475.78 213.34 L484.79 209.00 C481.88 193.75 477.28 172.66 468.15 154.86 C461.19 141.56 452.75 137.86 446.44 140.90 C440.13 143.93 437.77 152.84 443.82 166.57 C452.05 184.81 465.67 201.56 475.78 213.34 Z" fill="#262626" stroke="#262626" stroke-width="12.3" stroke-linejoin="round"/></g><g fill="none" stroke="#262626" stroke-width="1.3"><path d="M488.30 208.20 L498.30 208.20 C502.30 193.20 507.30 172.20 506.80 152.20 C506.30 137.20 500.30 130.20 493.30 130.20 C486.30 130.20 480.30 137.20 479.80 152.20 C479.30 172.20 484.30 193.20 488.30 208.20 Z"/><path d="M501.81 209.00 L510.82 213.34 C520.93 201.56 534.55 184.81 542.78 166.57 C548.83 152.84 546.47 143.93 540.16 140.90 C533.85 137.86 525.41 141.56 518.45 154.86 C509.32 172.66 504.72 193.75 501.81 209.00 Z"/><path d="M513.64 215.59 L519.87 223.40 C534.09 217.18 553.63 208.00 568.95 195.13 C580.37 185.39 582.10 176.34 577.74 170.86 C573.37 165.39 564.16 165.06 552.12 174.03 C536.17 186.10 522.87 203.11 513.64 215.59 Z"/><path d="M521.44 226.65 L523.66 236.40 C539.17 236.96 560.76 237.16 580.15 232.22 C594.66 228.40 600.15 220.99 598.59 214.17 C597.03 207.34 588.87 203.05 574.14 205.90 C554.53 209.86 535.17 219.41 521.44 226.65 Z"/><path d="M523.66 240.00 L521.44 249.75 C535.17 256.99 554.53 266.54 574.14 270.50 C588.87 273.35 597.03 269.06 598.59 262.23 C600.15 255.41 594.66 248.00 580.15 244.18 C560.76 239.24 539.17 239.44 523.66 240.00 Z"/><path d="M519.87 253.00 L513.64 260.81 C522.87 273.29 536.17 290.30 552.12 302.37 C564.16 311.34 573.37 311.01 577.74 305.54 C582.10 300.06 580.37 291.01 568.95 281.27 C553.63 268.40 534.09 259.22 519.87 253.00 Z"/><path d="M510.82 263.06 L501.81 267.40 C504.72 282.65 509.32 303.74 518.45 321.54 C525.41 334.84 533.85 338.54 540.16 335.50 C546.47 332.47 548.83 323.56 542.78 309.83 C534.55 291.59 520.93 274.84 510.82 263.06 Z"/><path d="M498.30 268.20 L488.30 268.20 C484.30 283.20 479.30 304.20 479.80 324.20 C480.30 339.20 486.30 346.20 493.30 346.20 C500.30 346.20 506.30 339.20 506.80 324.20 C507.30 304.20 502.30 283.20 498.30 268.20 Z"/><path d="M484.79 267.40 L475.78 263.06 C465.67 274.84 452.05 291.59 443.82 309.83 C437.77 323.56 440.13 332.47 446.44 335.50 C452.75 338.54 461.19 334.84 468.15 321.54 C477.28 303.74 481.88 282.65 484.79 267.40 Z"/><path d="M472.96 260.81 L466.73 253.00 C452.51 259.22 432.97 268.40 417.65 281.27 C406.23 291.01 404.50 300.06 408.86 305.54 C413.23 311.01 422.44 311.34 434.48 302.37 C450.43 290.30 463.73 273.29 472.96 260.81 Z"/><path d="M465.16 249.75 L462.94 240.00 C447.43 239.44 425.84 239.24 406.45 244.18 C391.94 248.00 386.45 255.41 388.01 262.23 C389.57 269.06 397.73 273.35 412.46 270.50 C432.07 266.54 451.43 256.99 465.16 249.75 Z"/><path d="M462.94 236.40 L465.16 226.65 C451.43 219.41 432.07 209.86 412.46 205.90 C397.73 203.05 389.57 207.34 388.01 214.17 C386.45 220.99 391.94 228.40 406.45 232.22 C425.84 237.16 447.43 236.96 462.94 236.40 Z"/><path d="M466.73 223.40 L472.96 215.59 C463.73 203.11 450.43 186.10 434.48 174.03 C422.44 165.06 413.23 165.39 408.86 170.86 C404.50 176.34 406.23 185.39 417.65 195.13 C432.97 208.00 452.51 217.18 466.73 223.40 Z"/><path d="M475.78 213.34 L484.79 209.00 C481.88 193.75 477.28 172.66 468.15 154.86 C461.19 141.56 452.75 137.86 446.44 140.90 C440.13 143.93 437.77 152.84 443.82 166.57 C452.05 184.81 465.67 201.56 475.78 213.34 Z"/><circle cx="493.29999999999995" cy="238.2" r="24"/></g><defs><mask id="m2" maskUnits="userSpaceOnUse" x="0" y="0" width="1390" height="766"><rect width="1390" height="766" fill="#fff"/><path d="M491.65 505.68 C476.76 480.31 462.48 416.39 506.09 416.00 C549.71 415.62 536.54 479.79 520.25 504.44" fill="none" stroke="#000" stroke-width="3.5"/><path d="M525.15 507.44 C549.94 491.34 607.55 464.18 617.20 505.98 C625.25 540.81 562.06 543.86 536.55 537.12" fill="none" stroke="#000" stroke-width="3.5"/><path d="M534.46 543.70 C557.34 555.91 603.61 596.86 575.44 618.87 C543.89 643.52 516.41 587.89 508.15 561.38" fill="none" stroke="#000" stroke-width="3.5"/><path d="M506.21 561.39 C497.79 587.89 470.31 643.52 438.76 618.87 C410.59 596.86 456.86 555.91 479.76 543.75" fill="none" stroke="#000" stroke-width="3.5"/><path d="M477.99 538.66 C451.46 544.80 388.12 541.53 397.46 504.06 C407.84 462.44 464.97 490.60 488.63 507.76" fill="none" stroke="#000" stroke-width="3.5"/><circle cx="507.1" cy="531.4" r="37.35" fill="#000"/></mask></defs><g mask="url(#m2)"><path d="M491.65 505.68 C476.76 480.31 462.48 416.39 506.09 416.00 C549.71 415.62 536.54 479.79 520.25 504.44" fill="none" stroke="#262626" stroke-width="6.1"/><path d="M525.15 507.44 C549.94 491.34 607.55 464.18 617.20 505.98 C625.25 540.81 562.06 543.86 536.55 537.12" fill="none" stroke="#262626" stroke-width="6.1"/><path d="M534.46 543.70 C557.34 555.91 603.61 596.86 575.44 618.87 C543.89 643.52 516.41 587.89 508.15 561.38" fill="none" stroke="#262626" stroke-width="6.1"/><path d="M506.21 561.39 C497.79 587.89 470.31 643.52 438.76 618.87 C410.59 596.86 456.86 555.91 479.76 543.75" fill="none" stroke="#262626" stroke-width="6.1"/><path d="M477.99 538.66 C451.46 544.80 388.12 541.53 397.46 504.06 C407.84 462.44 464.97 490.60 488.63 507.76" fill="none" stroke="#262626" stroke-width="6.1"/><circle cx="507.1" cy="531.4" r="35.6" fill="none" stroke="#262626" stroke-width="6.1"/></g><circle cx="507.1" cy="531.4" r="33.20" fill="none" stroke="#262626" stroke-width="1.30"/><path d="M603 0 V766" stroke="#a8a8a8" stroke-width="1.6" stroke-dasharray="3 3"/><path d="M0 752.7 H1390" stroke="#a8a8a8" stroke-width="1.6" stroke-dasharray="3 3"/><g font-family="Liberation Sans, sans-serif" font-size="14" fill="#8a8a8a"><text x="16.3" y="19.5" text-anchor="middle">13</text><text x="16.3" y="757.5" text-anchor="middle">13</text><text x="67.1" y="19.5" text-anchor="middle">15</text><text x="67.1" y="757.5" text-anchor="middle">15</text><text x="117.8" y="19.5" text-anchor="middle">18</text><text x="117.8" y="757.5" text-anchor="middle">18</text><text x="168.6" y="19.5" text-anchor="middle">20</text><text x="168.6" y="757.5" text-anchor="middle">20</text><text x="219.3" y="19.5" text-anchor="middle">23</text><text x="219.3" y="757.5" text-anchor="middle">23</text><text x="270.0" y="19.5" text-anchor="middle">25</text><text x="270.0" y="757.5" text-anchor="middle">25</text><text x="320.8" y="19.5" text-anchor="middle">28</text><text x="320.8" y="757.5" text-anchor="middle">28</text><text x="371.5" y="19.5" text-anchor="middle">30</text><text x="371.5" y="757.5" text-anchor="middle">30</text><text x="422.3" y="19.5" text-anchor="middle">33</text><text x="422.3" y="757.5" text-anchor="middle">33</text><text x="473.0" y="19.5" text-anchor="middle">35</text><text x="473.0" y="757.5" text-anchor="middle">35</text><text x="523.7" y="19.5" text-anchor="middle">38</text><text x="523.7" y="757.5" text-anchor="middle">38</text><text x="574.5" y="19.5" text-anchor="middle">40</text><text x="574.5" y="757.5" text-anchor="middle">40</text><text x="625.2" y="19.5" text-anchor="middle">43</text><text x="625.2" y="757.5" text-anchor="middle">43</text><text x="676.0" y="19.5" text-anchor="middle">45</text><text x="676.0" y="757.5" text-anchor="middle">45</text><text x="726.7" y="19.5" text-anchor="middle">48</text><text x="726.7" y="757.5" text-anchor="middle">48</text><text x="777.4" y="19.5" text-anchor="middle">50</text><text x="777.4" y="757.5" text-anchor="middle">50</text><text x="828.2" y="19.5" text-anchor="middle">53</text><text x="828.2" y="757.5" text-anchor="middle">53</text><text x="878.9" y="19.5" text-anchor="middle">55</text><text x="878.9" y="757.5" text-anchor="middle">55</text><text x="929.7" y="19.5" text-anchor="middle">58</text><text x="929.7" y="757.5" text-anchor="middle">58</text><text x="980.4" y="19.5" text-anchor="middle">60</text><text x="980.4" y="757.5" text-anchor="middle">60</text><text x="1031.1" y="19.5" text-anchor="middle">63</text><text x="1031.1" y="757.5" text-anchor="middle">63</text><text x="1081.9" y="19.5" text-anchor="middle">65</text><text x="1081.9" y="757.5" text-anchor="middle">65</text><text x="1132.6" y="19.5" text-anchor="middle">68</text><text x="1132.6" y="757.5" text-anchor="middle">68</text><text x="1183.4" y="19.5" text-anchor="middle">70</text><text x="1183.4" y="757.5" text-anchor="middle">70</text><text x="1234.1" y="19.5" text-anchor="middle">73</text><text x="1234.1" y="757.5" text-anchor="middle">73</text><text x="1284.8" y="19.5" text-anchor="middle">75</text><text x="1284.8" y="757.5" text-anchor="middle">75</text><text x="1335.6" y="19.5" text-anchor="middle">78</text><text x="1335.6" y="757.5" text-anchor="middle">78</text><text x="1386.3" y="19.5" text-anchor="middle">80</text><text x="1386.3" y="757.5" text-anchor="middle">80</text><text x="4.5" y="40.3">400</text><text x="1386" y="40.3" text-anchor="end">400</text><text x="4.5" y="91.0">398</text><text x="1386" y="91.0" text-anchor="end">398</text><text x="4.5" y="141.8">395</text><text x="1386" y="141.8" text-anchor="end">395</text><text x="4.5" y="192.5">393</text><text x="1386" y="192.5" text-anchor="end">393</text><text x="4.5" y="243.2">390</text><text x="1386" y="243.2" text-anchor="end">390</text><text x="4.5" y="293.9">388</text><text x="1386" y="293.9" text-anchor="end">388</text><text x="4.5" y="344.6">385</text><text x="1386" y="344.6" text-anchor="end">385</text><text x="4.5" y="395.4">383</text><text x="1386" y="395.4" text-anchor="end">383</text><text x="4.5" y="446.1">380</text><text x="1386" y="446.1" text-anchor="end">380</text><text x="4.5" y="496.8">378</text><text x="1386" y="496.8" text-anchor="end">378</text><text x="4.5" y="547.5">375</text><text x="1386" y="547.5" text-anchor="end">375</text><text x="4.5" y="598.3">373</text><text x="1386" y="598.3" text-anchor="end">373</text><text x="4.5" y="649.0">370</text><text x="1386" y="649.0" text-anchor="end">370</text><text x="4.5" y="699.7">368</text><text x="1386" y="699.7" text-anchor="end">368</text><text x="4.5" y="750.5">365</text><text x="1386" y="750.5" text-anchor="end">365</text></g></svg>
<div class="a" style="left:1486px;top:181px;width:434px;height:20px;background:linear-gradient(90deg,#000 0%,#3a0f12 20%,#8a2226 45%,#c23434 60%,#d65a30 85%,#de7a30 100%)"></div>
<div class="t" style="left:1492.0px;top:183.9px;font-size:14.5px;color:#ffffff;">Cuts / Layers</div>
<svg class="a" style="left:1893px;top:186px;" width="26" height="11" viewBox="0 0 26 11"><rect x="0.6" y="0.6" width="10" height="10" rx="1.2" fill="none" stroke="#6b7075" stroke-width="1.2"/><rect x="2.7" y="4" width="4.5" height="4.2" fill="none" stroke="#6b7075" stroke-width="1"/><path d="M4.5 4 V2.5 H8.5 V6.5 H7.2" fill="none" stroke="#6b7075" stroke-width="1"/><rect x="14.6" y="0.6" width="10" height="10" rx="1.2" fill="none" stroke="#6b7075" stroke-width="1.2"/><path d="M16.8 2.8 L22.4 8.4 M22.4 2.8 L16.8 8.4" stroke="#6b7075" stroke-width="1.6"/></svg>
<div class="a" style="left:1488px;top:203px;width:400px;height:178px;background:#2d2d2d"></div>
<div class="a" style="left:1488px;top:203px;width:400px;height:23px;background:#474747"></div>
<div class="a" style="left:1517.6px;top:203px;width:1px;height:23px;background:#3a3a3a"></div>
<div class="a" style="left:1559.8px;top:203px;width:1px;height:23px;background:#3a3a3a"></div>
<div class="a" style="left:1652.8px;top:203px;width:1px;height:23px;background:#3a3a3a"></div>
<div class="a" style="left:1716.5px;top:203px;width:1px;height:23px;background:#3a3a3a"></div>
<div class="a" style="left:1770.7px;top:203px;width:1px;height:23px;background:#3a3a3a"></div>
<div class="a" style="left:1812.6px;top:203px;width:1px;height:23px;background:#3a3a3a"></div>
<div class="t" style="left:1494.0px;top:206.9px;font-size:14.5px;color:#e8e8e8;">#</div>
<div class="t" style="left:1521.0px;top:206.9px;font-size:14.5px;color:#e8e8e8;">Layer</div>
<div class="t" style="left:1563.0px;top:206.9px;font-size:14.5px;color:#e8e8e8;">Mode</div>
<div class="t" style="left:1656.0px;top:206.9px;font-size:14.5px;color:#e8e8e8;">Spd/Pwr</div>
<div class="t" style="left:1720.0px;top:206.9px;font-size:14.5px;color:#e8e8e8;">Output</div>
<div class="t" style="left:1774.0px;top:206.9px;font-size:14.5px;color:#e8e8e8;">Show</div>
<div class="t" style="left:1816.0px;top:206.9px;font-size:14.5px;color:#e8e8e8;">Air</div>
<div class="a" style="left:1488px;top:226px;width:400px;height:30px;background:#2d2d2d"></div>
<div class="a" style="left:1488px;top:256px;width:400px;height:30px;background:#232323"></div>
<div class="t" style="left:1491.0px;top:233.9px;font-size:14.5px;color:#e8e8e8;">C00</div>
<div class="a" style="left:1522px;top:231px;width:30px;height:20px;background:#000"></div>
<div class="t" style="left:1522.0px;width:30px;text-align:center;top:234.2px;font-size:13px;color:#ffffff;">00</div>
<div class="t" style="left:1564.0px;top:233.9px;font-size:14.5px;color:#e8e8e8;">Image</div>
<div class="t" style="left:1656.0px;top:233.9px;font-size:14.5px;color:#e8e8e8;">45 / 71</div>
<div class="t" style="left:1491.0px;top:263.9px;font-size:14.5px;color:#e8e8e8;">C00</div>
<div class="a" style="left:1522px;top:261px;width:30px;height:20px;background:#0b2545"></div>
<div class="t" style="left:1522.0px;width:30px;text-align:center;top:264.2px;font-size:13px;color:#5a86c8;">00</div>
<div class="a" style="left:1562px;top:257px;width:92px;height:28px;background:linear-gradient(#535353,#494949);border:1px solid #686868;border-radius:3px;box-shadow:0 0 0 1px #151515"></div>
<div class="t" style="left:1567.0px;top:264.9px;font-size:14.5px;color:#e8e8e8;">Line</div>
<svg class="a" style="left:1633px;top:268px;" width="12" height="6" viewBox="0 0 12 6"><path d="M0.5 0.5 L11.5 0.5 L6 5.5 Z" fill="#c8c8c8"/></svg>
<div class="t" style="left:1656.0px;top:263.9px;font-size:14.5px;color:#e8e8e8;">30 / 70</div>
<svg class="a" style="left:1724px;top:234px;" width="22" height="14" viewBox="0 0 22 14"><rect x="8" y="3" width="14" height="8" rx="1" fill="#9a0a0a"/><rect x="0" y="0" width="11" height="14" rx="4" fill="#ddd8d8"/></svg>
<svg class="a" style="left:1779px;top:234px;" width="22" height="14" viewBox="0 0 22 14"><rect x="0" y="3" width="14" height="8" rx="1" fill="#17e017"/><rect x="10.5" y="0" width="11" height="14" rx="4" fill="#e6e6e6"/></svg>
<svg class="a" style="left:1820px;top:234px;" width="22" height="14" viewBox="0 0 22 14"><rect x="0" y="3" width="14" height="8" rx="1" fill="#17e017"/><rect x="10.5" y="0" width="11" height="14" rx="4" fill="#e6e6e6"/></svg>
<svg class="a" style="left:1725px;top:264px;" width="22" height="14" viewBox="0 0 22 14"><rect x="0" y="3" width="14" height="8" rx="1" fill="#17e017"/><rect x="10.5" y="0" width="11" height="14" rx="4" fill="#e6e6e6"/></svg>
<svg class="a" style="left:1779px;top:264px;" width="22" height="14" viewBox="0 0 22 14"><rect x="0" y="3" width="14" height="8" rx="1" fill="#17e017"/><rect x="10.5" y="0" width="11" height="14" rx="4" fill="#e6e6e6"/></svg>
<svg class="a" style="left:1820px;top:264px;" width="22" height="14" viewBox="0 0 22 14"><rect x="0" y="3" width="14" height="8" rx="1" fill="#17e017"/><rect x="10.5" y="0" width="11" height="14" rx="4" fill="#e6e6e6"/></svg>
<div class="a" style="left:1891px;top:219px;width:28px;height:17px;background:linear-gradient(#464646,#393939);border:1px solid #2a2a2a;border-radius:2px"></div>
<svg class="a" style="left:1891px;top:219px;" width="28" height="17" viewBox="0 0 28 17"><path d="M9 11 L14 6 L19 11" fill="none" stroke="#fff" stroke-width="2.4"/></svg>
<div class="a" style="left:1891px;top:239px;width:28px;height:17px;background:linear-gradient(#464646,#393939);border:1px solid #2a2a2a;border-radius:2px"></div>
<svg class="a" style="left:1891px;top:239px;" width="28" height="17" viewBox="0 0 28 17"><path d="M9 6 L14 11 L19 6" fill="none" stroke="#fff" stroke-width="2.4"/></svg>
<div class="a" style="left:1891px;top:274px;width:28px;height:23px;background:linear-gradient(#464646,#393939);border:1px solid #2a2a2a;border-radius:2px"></div>
<svg class="a" style="left:1891px;top:274px;" width="28" height="23" viewBox="0 0 28 23"><path d="M8 6 H20 M12 5.5 V4 H16 V5.5" fill="none" stroke="#fff" stroke-width="1.5"/><path d="M9 7 L10 19 H18 L19 7" fill="none" stroke="#fff" stroke-width="1.6"/><path d="M12 9 V17 M14 9 V17 M16 9 V17" stroke="#fff" stroke-width="1"/></svg>
<div class="a" style="left:1891px;top:316px;width:28px;height:23px;background:linear-gradient(#464646,#393939);border:1px solid #2a2a2a;border-radius:2px"></div>
<svg class="a" style="left:1891px;top:316px;" width="28" height="23" viewBox="0 0 28 23"><path d="M7 5 H12 L14 7 V16 H7 Z" fill="none" stroke="#fff" stroke-width="1.3"/><path d="M11 8 H17 L20 11 V20 H11 Z" fill="#3e3e3e" stroke="#fff" stroke-width="1.3"/><path d="M13 13 H18 M13 15.5 H18 M13 18 H18" stroke="#fff" stroke-width="1"/></svg>
<div class="a" style="left:1891px;top:341px;width:28px;height:23px;background:linear-gradient(#464646,#393939);border:1px solid #2a2a2a;border-radius:2px"></div>
<svg class="a" style="left:1891px;top:341px;" width="28" height="23" viewBox="0 0 28 23"><rect x="7" y="5" width="12" height="15" rx="1.5" fill="#fff"/><path d="M10 5.5 V3.5 H16 V5.5" fill="none" stroke="#fff" stroke-width="1.4"/><path d="M12 10 H18 L21 13 V21 H12 Z" fill="#3e3e3e" stroke="#fff" stroke-width="1.2"/><path d="M14 14 H19 M14 16.5 H19 M14 19 H19" stroke="#fff" stroke-width="1"/></svg>
<div class="a" style="left:1488px;top:388px;width:431px;height:95px;border:1px solid #333;border-radius:2px"></div>
<div class="t" style="right:288.0px;top:398.9px;font-size:14.5px;color:#e8e8e8;">Layer Color</div>
<div class="a" style="left:1638px;top:392px;width:78px;height:29px;background:#000;border:2px solid #fff"></div>
<div class="t" style="right:102.0px;top:398.9px;font-size:14.5px;color:#e8e8e8;">Speed (mm/s)</div>
<div class="a" style="left:1826px;top:394px;width:86px;height:25px;background:#1b1b1b;border:1px solid #141414;border-radius:3px"></div>
<svg class="a" style="left:1894px;top:395px;" width="17" height="23" viewBox="0 0 17 23"><path d="M0 0 H15 Q17 0 17 2 V21 Q17 23 15 23 H0 Z" fill="#4b4b4b"/><rect x="0" y="11.0" width="17" height="1" fill="#424242"/><path d="M4.0 8.0 L8.5 3.5 L13.0 8.0 Z" fill="#8c8c8c"/><path d="M4.0 15.0 L8.5 19.5 L13.0 15.0 Z" fill="#8c8c8c"/></svg>
<div class="t" style="right:31.0px;top:398.9px;font-size:14.5px;color:#e8e8e8;">30.00</div>
<div class="t" style="right:288.0px;top:427.9px;font-size:14.5px;color:#e8e8e8;">Pass Count</div>
<div class="a" style="left:1639px;top:423px;width:76px;height:25px;background:#1b1b1b;border:1px solid #141414;border-radius:3px"></div>
<svg class="a" style="left:1697px;top:424px;" width="17" height="23" viewBox="0 0 17 23"><path d="M0 0 H15 Q17 0 17 2 V21 Q17 23 15 23 H0 Z" fill="#4b4b4b"/><rect x="0" y="11.0" width="17" height="1" fill="#424242"/><path d="M4.0 8.0 L8.5 3.5 L13.0 8.0 Z" fill="#8c8c8c"/><path d="M4.0 15.0 L8.5 19.5 L13.0 15.0 Z" fill="#8c8c8c"/></svg>
<div class="t" style="right:229.0px;top:427.9px;font-size:14.5px;color:#e8e8e8;">1</div>
<div class="t" style="right:102.0px;top:427.9px;font-size:14.5px;color:#e8e8e8;">Power Max (%)</div>
<div class="a" style="left:1826px;top:423px;width:86px;height:25px;background:#1b1b1b;border:1px solid #141414;border-radius:3px"></div>
<svg class="a" style="left:1894px;top:424px;" width="17" height="23" viewBox="0 0 17 23"><path d="M0 0 H15 Q17 0 17 2 V21 Q17 23 15 23 H0 Z" fill="#4b4b4b"/><rect x="0" y="11.0" width="17" height="1" fill="#424242"/><path d="M4.0 8.0 L8.5 3.5 L13.0 8.0 Z" fill="#8c8c8c"/><path d="M4.0 15.0 L8.5 19.5 L13.0 15.0 Z" fill="#8c8c8c"/></svg>
<div class="t" style="right:31.0px;top:427.9px;font-size:14.5px;color:#e8e8e8;">70.00</div>
<div class="t" style="right:288.0px;top:456.9px;font-size:14.5px;color:#8c8c8c;">Interval (mm)</div>
<div class="a" style="left:1639px;top:452px;width:76px;height:25px;background:#1b1b1b;border:1px solid #141414;border-radius:3px"></div>
<svg class="a" style="left:1697px;top:453px;" width="17" height="23" viewBox="0 0 17 23"><path d="M0 0 H15 Q17 0 17 2 V21 Q17 23 15 23 H0 Z" fill="#4b4b4b"/><rect x="0" y="11.0" width="17" height="1" fill="#424242"/><path d="M4.0 8.0 L8.5 3.5 L13.0 8.0 Z" fill="#8c8c8c"/><path d="M4.0 15.0 L8.5 19.5 L13.0 15.0 Z" fill="#8c8c8c"/></svg>
<div class="t" style="right:229.0px;top:456.9px;font-size:14.5px;color:#8c8c8c;">0.100</div>
<div class="a" style="left:1486px;top:484px;width:434px;height:38px;background:#1e1e1e"></div>
<div class="a" style="left:1487px;top:486px;width:113px;height:32px;background:#1c1c1c;border:1px solid #333;border-bottom:none;border-radius:3px 3px 0 0"></div>
<div class="t" style="left:1488.0px;width:110px;text-align:center;top:494.9px;font-size:14.5px;color:#e8e8e8;">Cuts / Layers</div>
<div class="a" style="left:1601px;top:487px;width:65px;height:29px;background:#1c1c1c;border:1px solid #333;border-radius:3px 3px 0 0"></div>
<div class="t" style="left:1603.0px;width:60px;text-align:center;top:494.9px;font-size:14.5px;color:#e8e8e8;">Move</div>
<div class="a" style="left:1667px;top:487px;width:82px;height:29px;background:#1c1c1c;border:1px solid #333;border-radius:3px 3px 0 0"></div>
<div class="t" style="left:1668.0px;width:80px;text-align:center;top:494.9px;font-size:14.5px;color:#e8e8e8;">Console</div>
<svg class="a" style="left:1696px;top:522px;" width="18" height="2" viewBox="0 0 18 2"><rect x="0" y="0" width="2" height="2" fill="#777"/><rect x="3" y="0" width="2" height="2" fill="#777"/><rect x="6" y="0" width="2" height="2" fill="#777"/><rect x="9" y="0" width="2" height="2" fill="#777"/><rect x="12" y="0" width="2" height="2" fill="#777"/><rect x="15" y="0" width="2" height="2" fill="#777"/></svg>
<div class="a" style="left:1486px;top:527px;width:434px;height:20px;background:linear-gradient(90deg,#000 0%,#3a0f12 20%,#8a2226 45%,#c23434 60%,#d65a30 85%,#de7a30 100%)"></div>
<div class="t" style="left:1492.0px;top:529.9px;font-size:14.5px;color:#ffffff;">Laser</div>
<svg class="a" style="left:1893px;top:532px;" width="26" height="11" viewBox="0 0 26 11"><rect x="0.6" y="0.6" width="10" height="10" rx="1.2" fill="none" stroke="#6b7075" stroke-width="1.2"/><rect x="2.7" y="4" width="4.5" height="4.2" fill="none" stroke="#6b7075" stroke-width="1"/><path d="M4.5 4 V2.5 H8.5 V6.5 H7.2" fill="none" stroke="#6b7075" stroke-width="1"/><rect x="14.6" y="0.6" width="10" height="10" rx="1.2" fill="none" stroke="#6b7075" stroke-width="1.2"/><path d="M16.8 2.8 L22.4 8.4 M22.4 2.8 L16.8 8.4" stroke="#6b7075" stroke-width="1.6"/></svg>
<div class="t" style="left:1487.0px;top:549.9px;font-size:14.5px;color:#ffffff;">Ready</div>
<svg class="a" style="left:1483px;top:560px;" width="3" height="20" viewBox="0 0 3 20"><rect x="0" y="0" width="2" height="2" fill="#666"/><rect x="0" y="3" width="2" height="2" fill="#666"/><rect x="0" y="6" width="2" height="2" fill="#666"/><rect x="0" y="9" width="2" height="2" fill="#666"/><rect x="0" y="12" width="2" height="2" fill="#666"/><rect x="0" y="15" width="2" height="2" fill="#666"/><rect x="0" y="18" width="2" height="2" fill="#666"/></svg>
<div class="a" style="left:1488px;top:569px;width:141px;height:54px;background:linear-gradient(#535353,#494949);border:1px solid #686868;border-radius:3px;box-shadow:0 0 0 1px #151515"></div>
<div class="a" style="left:1633px;top:569px;width:141px;height:54px;background:linear-gradient(#535353,#494949);border:1px solid #686868;border-radius:3px;box-shadow:0 0 0 1px #151515"></div>
<div class="a" style="left:1778px;top:569px;width:141px;height:54px;background:linear-gradient(#535353,#494949);border:1px solid #686868;border-radius:3px;box-shadow:0 0 0 1px #151515"></div>
<svg class="a" style="left:1528px;top:586px;" width="18" height="20" viewBox="0 0 18 20"><rect x="0" y="0" width="6" height="20" rx="1" fill="#fff"/><rect x="12" y="0" width="6" height="20" rx="1" fill="#fff"/></svg>
<div class="t" style="left:1549.0px;top:588.9px;font-size:14.5px;color:#fff;">Pause</div>
<div class="a" style="left:1675px;top:586px;width:20px;height:20px;background:#fff;border-radius:1px"></div>
<div class="t" style="left:1697.0px;top:588.9px;font-size:14.5px;color:#fff;">Stop</div>
<svg class="a" style="left:1821px;top:586px;" width="19" height="20" viewBox="0 0 19 20"><path d="M0 0 L19 10 L0 20 Z" fill="#fff"/></svg>
<div class="t" style="left:1842.0px;top:588.9px;font-size:14.5px;color:#fff;">Start</div>
<div class="a" style="left:1488px;top:626px;width:105px;height:53px;background:linear-gradient(#535353,#494949);border:1px solid #686868;border-radius:3px;box-shadow:0 0 0 1px #151515"></div>
<div class="a" style="left:1597px;top:626px;width:105px;height:53px;background:linear-gradient(#535353,#494949);border:1px solid #686868;border-radius:3px;box-shadow:0 0 0 1px #151515"></div>
<div class="a" style="left:1706px;top:626px;width:103px;height:53px;background:linear-gradient(#535353,#494949);border:1px solid #686868;border-radius:3px;box-shadow:0 0 0 1px #151515"></div>
<div class="a" style="left:1814px;top:626px;width:105px;height:53px;background:linear-gradient(#535353,#494949);border:1px solid #686868;border-radius:3px;box-shadow:0 0 0 1px #151515"></div>
<svg class="a" style="left:1506px;top:642px;" width="21" height="21" viewBox="0 0 21 21"><path d="M1.5 8 V1.5 H8.5 M12.5 1.5 H19.5 V8 M19.5 12.5 V19.5 H12.5 M8.5 19.5 H1.5 V12.5" fill="none" stroke="#fff" stroke-width="2.8"/></svg>
<div class="t" style="left:1528.0px;top:645.9px;font-size:14.5px;color:#fff;">Frame</div>
<svg class="a" style="left:1615px;top:642px;" width="20" height="20" viewBox="0 0 20 20"><circle cx="10" cy="10" r="8.5" fill="none" stroke="#fff" stroke-width="2" stroke-dasharray="5 3"/></svg>
<div class="t" style="left:1637.0px;top:645.9px;font-size:14.5px;color:#fff;">Frame</div>
<div class="t" style="left:1707.0px;width:100px;text-align:center;top:645.9px;font-size:14.5px;color:#fff;">Save GCode</div>
<div class="t" style="left:1816.0px;width:100px;text-align:center;top:645.9px;font-size:14.5px;color:#fff;">Run GCode</div>
<div class="a" style="left:1488px;top:683px;width:89px;height:25px;background:linear-gradient(#535353,#494949);border:1px solid #686868;border-radius:3px;box-shadow:0 0 0 1px #151515"></div>
<div class="a" style="left:1585px;top:682px;width:90px;height:27px;background:linear-gradient(#535353,#494949);border:1px solid #686868;border-radius:3px;box-shadow:0 0 0 1px #151515"></div>
<svg class="a" style="left:1500px;top:686px;" width="19" height="19" viewBox="0 0 19 19"><path d="M9.5 1 L18.5 9.5 H16 V18 H3 V9.5 H0.5 Z" fill="#fff"/><rect x="7.5" y="11" width="4" height="7" fill="#4a4a4a"/><rect x="14" y="2" width="2.5" height="5" fill="#fff"/></svg>
<div class="t" style="left:1522.0px;top:688.9px;font-size:14.5px;color:#fff;">Home</div>
<div class="t" style="left:1585.0px;width:90px;text-align:center;top:689.9px;font-size:14.5px;color:#fff;">Go to Origin</div>
<div class="t" style="right:149.0px;top:688.9px;font-size:14.5px;color:#e8e8e8;">Start From:</div>
<div class="a" style="left:1778px;top:682px;width:141px;height:27px;background:linear-gradient(#535353,#494949);border:1px solid #686868;border-radius:3px;box-shadow:0 0 0 1px #151515"></div>
<div class="t" style="left:1782.0px;top:687.9px;font-size:14.5px;color:#e8e8e8;">Absolute Coords</div>
<svg class="a" style="left:1898px;top:693px;" width="12" height="6" viewBox="0 0 12 6"><path d="M0.5 0.5 L11.5 0.5 L6 5.5 Z" fill="#c8c8c8"/></svg>
<div class="t" style="right:149.0px;top:734.9px;font-size:14.5px;color:#e8e8e8;">Job Origin</div>
<div class="a" style="left:1780px;top:714px;width:137px;height:59px;border:1px solid #262626;border-radius:2px;background:#1c1c1c"></div>
<svg class="a" style="left:1780px;top:714px;" width="137" height="59" viewBox="0 0 137 59"><circle cx="11" cy="11.2" r="7.5" fill="none" stroke="#131313" stroke-width="1.2"/><circle cx="11" cy="28.8" r="7.5" fill="none" stroke="#131313" stroke-width="1.2"/><circle cx="11" cy="46.5" r="7.5" fill="none" stroke="#131313" stroke-width="1.2"/><circle cx="55" cy="11.2" r="7.5" fill="none" stroke="#131313" stroke-width="1.2"/><circle cx="55" cy="28.8" r="7.5" fill="none" stroke="#131313" stroke-width="1.2"/><circle cx="55" cy="46.5" r="7.5" fill="none" stroke="#131313" stroke-width="1.2"/><circle cx="99" cy="11.2" r="7.5" fill="none" stroke="#131313" stroke-width="1.2"/><circle cx="99" cy="28.8" r="7.5" fill="none" stroke="#131313" stroke-width="1.2"/><circle cx="99" cy="46.5" r="7.5" fill="none" stroke="#131313" stroke-width="1.2"/><circle cx="99" cy="11.2" r="4.5" fill="#8a8a8a"/></svg>
<svg class="a" style="left:1487px;top:781px;" width="16" height="11" viewBox="0 0 16 11"><rect x="6" y="2" width="10" height="7" fill="#b00000"/><rect x="0" y="0" width="8" height="10" rx="3" fill="#ddd8d8"/></svg>
<div class="t" style="left:1510.0px;top:779.9px;font-size:14.5px;color:#e8e8e8;">Cut Selected Graphics</div>
<svg class="a" style="left:1487px;top:809px;" width="16" height="11" viewBox="0 0 16 11"><rect x="6" y="2" width="10" height="7" fill="#2c2c2c"/><rect x="0" y="0" width="8" height="10" rx="3" fill="#d0d0d0"/></svg>
<div class="t" style="left:1510.0px;top:807.9px;font-size:14.5px;color:#8c8c8c;">Use Selection Origin</div>
<div class="a" style="left:1682px;top:774px;width:237px;height:26px;background:linear-gradient(#535353,#494949);border:1px solid #686868;border-radius:2px;box-shadow:0 0 0 1px #151515"></div>
<div class="a" style="left:1682px;top:802px;width:237px;height:26px;background:linear-gradient(#535353,#494949);border:1px solid #686868;border-radius:2px;box-shadow:0 0 0 1px #151515"></div>
<svg class="a" style="left:1727px;top:777px;" width="20" height="20" viewBox="0 0 20 20"><path d="M10 0 V3 M10 5 V8 M10 12 V15 M10 17 V20 M0 10 H3 M5 10 H8 M12 10 H15 M17 10 H20" stroke="#fff" stroke-width="1.6"/><path d="M10 7 V13 M7 10 H13" stroke="#e02020" stroke-width="2"/></svg>
<div class="t" style="left:1750.0px;top:779.9px;font-size:14.5px;color:#fff;">Show Last Position</div>
<div class="t" style="left:1685.0px;width:230px;text-align:center;top:807.9px;font-size:14.5px;color:#fff;">Optimization Settings</div>
<div class="a" style="left:1488px;top:831px;width:79px;height:28px;background:linear-gradient(#535353,#494949);border:1px solid #686868;border-radius:3px;box-shadow:0 0 0 1px #151515"></div>
<div class="t" style="left:1488.0px;width:78px;text-align:center;top:837.9px;font-size:14.5px;color:#fff;">Devices</div>
<div class="a" style="left:1574px;top:831px;width:169px;height:27px;background:linear-gradient(#535353,#494949);border:1px solid #686868;border-radius:3px;box-shadow:0 0 0 1px #151515"></div>
<div class="t" style="left:1578.0px;top:836.9px;font-size:14.5px;color:#e8e8e8;">COM7</div>
<svg class="a" style="left:1722px;top:843px;" width="12" height="6" viewBox="0 0 12 6"><path d="M0.5 0.5 L11.5 0.5 L6 5.5 Z" fill="#c8c8c8"/></svg>
<div class="a" style="left:1750px;top:831px;width:169px;height:27px;background:linear-gradient(#535353,#494949);border:1px solid #686868;border-radius:3px;box-shadow:0 0 0 1px #151515"></div>
<div class="a" style="left:1755px;top:834px;width:21px;height:20px;background:#fff"></div>
<div class="t" style="left:1754.5px;width:22px;text-align:center;top:839.0px;font-size:10px;color:#000;letter-spacing:-0.5px">grbl</div>
<div class="t" style="left:1778.0px;top:836.9px;font-size:14.5px;color:#e8e8e8;">CR-Laser Falcon</div>
<svg class="a" style="left:1898px;top:843px;" width="12" height="6" viewBox="0 0 12 6"><path d="M0.5 0.5 L11.5 0.5 L6 5.5 Z" fill="#c8c8c8"/></svg>
<div class="a" style="left:1486px;top:920px;width:434px;height:33px;background:#1b1b1b"></div>
<div class="a" style="left:1487px;top:919px;width:63px;height:32px;background:#1e1e1e;border:1px solid #333;border-top:none;border-radius:0 0 3px 3px"></div>
<div class="t" style="left:1488.0px;width:60px;text-align:center;top:927.9px;font-size:14.5px;color:#e8e8e8;">Laser</div>
<div class="a" style="left:1551px;top:919px;width:132px;height:31px;background:#1e1e1e;border:1px solid #333;border-top:none;border-radius:0 0 3px 3px"></div>
<div class="t" style="left:1552.0px;width:130px;text-align:center;top:927.9px;font-size:14.5px;color:#e8e8e8;">Material Library</div>
<div class="a" style="left:1486px;top:952px;width:434px;height:1px;background:#151515"></div>
<div class="a" style="left:0px;top:953px;width:1920px;height:1px;background:#6a6a6a"></div>
<svg class="a" style="left:35px;top:187px;" width="18" height="5" viewBox="0 0 18 5"><rect x="0" y="0" width="2" height="2" fill="#777"/><rect x="0" y="3" width="2" height="2" fill="#777"/><rect x="3" y="0" width="2" height="2" fill="#777"/><rect x="3" y="3" width="2" height="2" fill="#777"/><rect x="6" y="0" width="2" height="2" fill="#777"/><rect x="6" y="3" width="2" height="2" fill="#777"/><rect x="9" y="0" width="2" height="2" fill="#777"/><rect x="9" y="3" width="2" height="2" fill="#777"/><rect x="12" y="0" width="2" height="2" fill="#777"/><rect x="12" y="3" width="2" height="2" fill="#777"/><rect x="15" y="0" width="2" height="2" fill="#777"/><rect x="15" y="3" width="2" height="2" fill="#777"/></svg>
<div class="a" style="left:29px;top:197px;width:24px;height:23px;background:#3c3c3c;border:1px solid #4a4a4a;border-radius:3px"></div>
<svg class="a" style="left:33px;top:199px;" width="16" height="20" viewBox="0 0 16 20"><path d="M2 1 L14 12 H9 L11.5 17.5 L8.5 19 L6 13.5 L2 17 Z" fill="none" stroke="#f8f8f8" stroke-width="1.5" stroke-linejoin="round"/></svg>
<svg class="a" style="left:33px;top:222px;" width="16" height="22" viewBox="0 0 16 22"><path d="M11 3 L14 6 L5 17 L2 18 L2.5 14.5 Z" fill="none" stroke="#f8f8f8" stroke-width="1.6" stroke-linejoin="round"/><path d="M10.5 2.5 Q12 0.5 14 2 Q15.5 3.5 14 5.5 Z" fill="#f8f8f8"/><path d="M9 6 L12.5 9.5 L5.5 17.5 L2.5 17 L3 14 Z" fill="#f8f8f8"/><path d="M2.2 15.5 L4 17.5 L1.5 18.5 Z" fill="#1e1e1e"/></svg>
<svg class="a" style="left:29px;top:249px;" width="24" height="24" viewBox="0 0 24 24"><rect x="1.5" y="1.5" width="21" height="21" fill="none" stroke="#f8f8f8" stroke-width="3"/><path d="M24 11 V24 H11 Z" fill="#3cc8c8"/></svg>
<svg class="a" style="left:30px;top:279px;" width="22" height="22" viewBox="0 0 22 22"><path d="M2 8 L11 2 L19 6 L21 15 L14 20 L3 20 Z" fill="none" stroke="#f8f8f8" stroke-width="1.6"/><circle cx="2" cy="8" r="1.6" fill="#f8f8f8"/><circle cx="11" cy="2" r="1.6" fill="#f8f8f8"/><circle cx="19" cy="6" r="1.6" fill="#f8f8f8"/><circle cx="21" cy="15" r="1.6" fill="#f8f8f8"/><circle cx="14" cy="20" r="1.6" fill="#f8f8f8"/><circle cx="3" cy="20" r="1.6" fill="#f8f8f8"/></svg>
<svg class="a" style="left:30px;top:305px;" width="22" height="22" viewBox="0 0 22 22"><circle cx="3" cy="11" r="2.2" fill="none" stroke="#f8f8f8" stroke-width="1.5"/><ellipse cx="9" cy="18" rx="2" ry="3" fill="none" stroke="#f8f8f8" stroke-width="1.5"/><path d="M5 11 L21 8 L10 13 Z M9 15 L13 1 L11 13 Z" fill="#f8f8f8"/></svg>
<svg class="a" style="left:31px;top:330px;" width="21" height="21" viewBox="0 0 21 21"><path d="M1 1 H20 M1 5 V19.5 H7 M14 19.5 H20 V5" fill="none" stroke="#ccc" stroke-width="1.8"/></svg>
<svg class="a" style="left:33px;top:357px;" width="17" height="17" viewBox="0 0 17 17"><path d="M0.5 16.5 L6.5 0.5 H10.5 L16.5 16.5 H12.5 L11.3 13 H5.7 L4.5 16.5 Z M6.8 10 H10.2 L8.5 4.5 Z" fill="#f8f8f8" fill-rule="evenodd"/></svg>
<svg class="a" style="left:33px;top:379px;" width="17" height="23" viewBox="0 0 17 23"><path d="M8.5 22.5 L2 12 Q0 9 0.5 7 Q1.5 0.5 8.5 0.5 Q15.5 0.5 16.5 7 Q17 9 15 12 Z" fill="#f8f8f8"/><circle cx="8.5" cy="7.5" r="3" fill="#1e1e1e"/></svg>
<svg class="a" style="left:30px;top:404px;" width="23" height="23" viewBox="0 0 23 23"><path d="M1 17 L17 1 L22 6 L6 22 Z" fill="none" stroke="#f8f8f8" stroke-width="2"/><path d="M5 15 L7 17 M8 12 L10 14 M11 9 L13 11 M14 6 L16 8" stroke="#f8f8f8" stroke-width="1.4"/></svg>
<svg class="a" style="left:35px;top:437px;" width="18" height="5" viewBox="0 0 18 5"><rect x="0" y="0" width="2" height="2" fill="#777"/><rect x="0" y="3" width="2" height="2" fill="#777"/><rect x="3" y="0" width="2" height="2" fill="#777"/><rect x="3" y="3" width="2" height="2" fill="#777"/><rect x="6" y="0" width="2" height="2" fill="#777"/><rect x="6" y="3" width="2" height="2" fill="#777"/><rect x="9" y="0" width="2" height="2" fill="#777"/><rect x="9" y="3" width="2" height="2" fill="#777"/><rect x="12" y="0" width="2" height="2" fill="#777"/><rect x="12" y="3" width="2" height="2" fill="#777"/><rect x="15" y="0" width="2" height="2" fill="#777"/><rect x="15" y="3" width="2" height="2" fill="#777"/></svg>
<svg class="a" style="left:31px;top:447px;" width="21" height="22" viewBox="0 0 21 22"><ellipse cx="10.5" cy="11" rx="9.5" ry="10.5" fill="none" stroke="#6b6b6b" stroke-width="1.4"/><ellipse cx="10.5" cy="11" rx="6.5" ry="7.5" fill="none" stroke="#6b6b6b" stroke-width="1.4"/><ellipse cx="10.5" cy="11" rx="3.5" ry="4.8" fill="none" stroke="#6b6b6b" stroke-width="1.6"/></svg>
<div class="a" style="left:10px;top:474px;width:63px;height:1px;background:#2c2c2c"></div>
<svg class="a" style="left:31px;top:480px;" width="22" height="22" viewBox="0 0 22 22"><rect x="1" y="4" width="13" height="14" fill="none" stroke="#6b6b6b" stroke-width="1.6"/><rect x="7" y="1" width="14" height="13" fill="none" stroke="#6b6b6b" stroke-width="1.6"/><rect x="4" y="8" width="12" height="13" fill="none" stroke="#6b6b6b" stroke-width="1.6"/><path d="M8 6 V12 M11 6 V12" stroke="#6b6b6b" stroke-width="0.8" stroke-dasharray="1 1"/></svg>
<svg class="a" style="left:30px;top:507px;" width="24" height="24" viewBox="0 0 24 24"><rect x="1.5" y="1.5" width="14" height="14" fill="none" stroke="#f8f8f8" stroke-width="2.2"/><rect x="7.5" y="7.5" width="15" height="15" fill="none" stroke="#f8f8f8" stroke-width="2.2"/><path d="M22.5 10 V22.5 H10 Z" fill="#6aa0a0"/></svg>
<div class="a" style="left:10px;top:540px;width:63px;height:1px;background:#2c2c2c"></div>
<svg class="a" style="left:30px;top:545px;" width="23" height="23" viewBox="0 0 23 23"><rect x="0.0" y="0.0" width="5.5" height="5.5" fill="#6b6b6b"/><rect x="0.0" y="8.3" width="5.5" height="5.5" fill="#6b6b6b"/><rect x="0.0" y="16.6" width="5.5" height="5.5" fill="#6b6b6b"/><rect x="8.3" y="0.0" width="5.5" height="5.5" fill="#6b6b6b"/><rect x="8.3" y="8.3" width="5.5" height="5.5" fill="#6b6b6b"/><rect x="8.3" y="16.6" width="5.5" height="5.5" fill="#6b6b6b"/><rect x="16.6" y="0.0" width="5.5" height="5.5" fill="#6b6b6b"/><rect x="16.6" y="8.3" width="5.5" height="5.5" fill="#6b6b6b"/><rect x="16.6" y="16.6" width="5.5" height="5.5" fill="#6b6b6b"/></svg>
<svg class="a" style="left:30px;top:570px;" width="23" height="23" viewBox="0 0 23 23"><rect x="9.2" y="0.2" width="4.6" height="4.6" fill="none" stroke="#6b6b6b" stroke-width="1.2" transform="rotate(0 11.5 2.5)"/><rect x="15.6" y="2.8" width="4.6" height="4.6" fill="none" stroke="#6b6b6b" stroke-width="1.2" transform="rotate(45 17.9 5.1)"/><rect x="18.2" y="9.2" width="4.6" height="4.6" fill="none" stroke="#6b6b6b" stroke-width="1.2" transform="rotate(90 20.5 11.5)"/><rect x="15.6" y="15.6" width="4.6" height="4.6" fill="none" stroke="#6b6b6b" stroke-width="1.2" transform="rotate(135 17.9 17.9)"/><rect x="9.2" y="18.2" width="4.6" height="4.6" fill="none" stroke="#6b6b6b" stroke-width="1.2" transform="rotate(180 11.5 20.5)"/><rect x="2.8" y="15.6" width="4.6" height="4.6" fill="none" stroke="#6b6b6b" stroke-width="1.2" transform="rotate(225 5.1 17.9)"/><rect x="0.2" y="9.2" width="4.6" height="4.6" fill="none" stroke="#6b6b6b" stroke-width="1.2" transform="rotate(270 2.5 11.5)"/><rect x="2.8" y="2.8" width="4.6" height="4.6" fill="none" stroke="#6b6b6b" stroke-width="1.2" transform="rotate(315 5.1 5.1)"/><rect x="9" y="0" width="5" height="5" fill="#6b6b6b"/></svg>
<div class="a" style="left:10px;top:598px;width:63px;height:1px;background:#2c2c2c"></div>
<svg class="a" style="left:30px;top:604px;" width="22" height="22" viewBox="0 0 22 22"><path d="M2 19 L2.5 5 L10.5 1.5 L16 3 L21 10 L16 19 Z" fill="none" stroke="#9a9a9a" stroke-width="1.5"/><circle cx="2" cy="16" r="1.3" fill="#6b6b6b"/><circle cx="10.5" cy="1.5" r="1.3" fill="#6b6b6b"/><circle cx="21" cy="10" r="1.3" fill="#6b6b6b"/><circle cx="16" cy="19" r="1.3" fill="#6b6b6b"/><path d="M9 2 L14 2.5 L12 5 M14 2.5 L11.5 0" fill="none" stroke="#f8f8f8" stroke-width="1.4"/></svg>
<svg class="a" style="left:30px;top:629px;" width="22" height="22" viewBox="0 0 22 22"><path d="M2.5 21 V12 Q2.5 2.5 12 2.5 H20" fill="none" stroke="#f8f8f8" stroke-width="1.8"/><path d="M20 3 V21 H3" fill="none" stroke="#f8f8f8" stroke-width="1.2" stroke-dasharray="1.5 1.5"/></svg>
<div class="t" style="left:6.5px;width:70px;text-align:center;top:654.9px;font-size:14.5px;color:#b8b8b8;">Radius:</div>
<div class="a" style="left:5px;top:675px;width:73px;height:25px;background:#1b1b1b;border:1px solid #141414;border-radius:3px"></div>
<svg class="a" style="left:61px;top:676px;" width="16" height="23" viewBox="0 0 16 23"><path d="M0 0 H14 Q16 0 16 2 V21 Q16 23 14 23 H0 Z" fill="#4b4b4b"/><rect x="0" y="11.0" width="16" height="1" fill="#424242"/><path d="M3.5 8.0 L8.0 3.5 L12.5 8.0 Z" fill="#8c8c8c"/><path d="M3.5 15.0 L8.0 19.5 L12.5 15.0 Z" fill="#8c8c8c"/></svg>
<div class="t" style="left:23.0px;top:679.9px;font-size:14.5px;color:#b8b8b8;">5.0</div>
<div class="a" style="left:0px;top:954px;width:1920px;height:35px;background:#1e1e1e"></div>
<svg class="a" style="left:7px;top:959px;" width="5" height="18" viewBox="0 0 5 18"><rect x="0" y="0" width="2" height="2" fill="#666"/><rect x="0" y="3" width="2" height="2" fill="#666"/><rect x="0" y="6" width="2" height="2" fill="#666"/><rect x="0" y="9" width="2" height="2" fill="#666"/><rect x="0" y="12" width="2" height="2" fill="#666"/><rect x="0" y="15" width="2" height="2" fill="#666"/><rect x="3" y="0" width="2" height="2" fill="#666"/><rect x="3" y="3" width="2" height="2" fill="#666"/><rect x="3" y="6" width="2" height="2" fill="#666"/><rect x="3" y="9" width="2" height="2" fill="#666"/><rect x="3" y="12" width="2" height="2" fill="#666"/><rect x="3" y="15" width="2" height="2" fill="#666"/></svg>
<div class="a" style="left:16px;top:959px;width:24px;height:24px;background:#000000;border:1px solid #3a3a3a"></div>
<div class="t" style="left:16.0px;width:24px;text-align:center;top:963.7px;font-size:13px;color:#fff;">00</div>
<div class="a" style="left:43px;top:959px;width:24px;height:24px;background:#0000ff"></div>
<div class="t" style="left:43.0px;width:24px;text-align:center;top:963.7px;font-size:13px;color:#fff;">01</div>
<div class="a" style="left:70px;top:959px;width:24px;height:24px;background:#ff0000"></div>
<div class="t" style="left:70.0px;width:24px;text-align:center;top:963.7px;font-size:13px;color:#fff;">02</div>
<div class="a" style="left:97px;top:959px;width:24px;height:24px;background:#00e000"></div>
<div class="t" style="left:97.0px;width:24px;text-align:center;top:963.7px;font-size:13px;color:#000;">03</div>
<div class="a" style="left:124px;top:959px;width:24px;height:24px;background:#d0d000"></div>
<div class="t" style="left:124.0px;width:24px;text-align:center;top:963.7px;font-size:13px;color:#000;">04</div>
<div class="a" style="left:151px;top:959px;width:24px;height:24px;background:#ff8000"></div>
<div class="t" style="left:151.0px;width:24px;text-align:center;top:963.7px;font-size:13px;color:#000;">05</div>
<div class="a" style="left:178px;top:959px;width:24px;height:24px;background:#00e0e0"></div>
<div class="t" style="left:178.0px;width:24px;text-align:center;top:963.7px;font-size:13px;color:#000;">06</div>
<div class="a" style="left:205px;top:959px;width:24px;height:24px;background:#ff00ff"></div>
<div class="t" style="left:205.0px;width:24px;text-align:center;top:963.7px;font-size:13px;color:#fff;">07</div>
<div class="a" style="left:232px;top:959px;width:24px;height:24px;background:#b4b4b4"></div>
<div class="t" style="left:232.0px;width:24px;text-align:center;top:963.7px;font-size:13px;color:#000;">08</div>
<div class="a" style="left:259px;top:959px;width:24px;height:24px;background:#0000a0"></div>
<div class="t" style="left:259.0px;width:24px;text-align:center;top:963.7px;font-size:13px;color:#fff;">09</div>
<div class="a" style="left:286px;top:959px;width:24px;height:24px;background:#a00000"></div>
<div class="t" style="left:286.0px;width:24px;text-align:center;top:963.7px;font-size:13px;color:#fff;">10</div>
<div class="a" style="left:313px;top:959px;width:24px;height:24px;background:#00a000"></div>
<div class="t" style="left:313.0px;width:24px;text-align:center;top:963.7px;font-size:13px;color:#fff;">11</div>
<div class="a" style="left:340px;top:959px;width:24px;height:24px;background:#a0a000"></div>
<div class="t" style="left:340.0px;width:24px;text-align:center;top:963.7px;font-size:13px;color:#000;">12</div>
<div class="a" style="left:367px;top:959px;width:24px;height:24px;background:#c08000"></div>
<div class="t" style="left:367.0px;width:24px;text-align:center;top:963.7px;font-size:13px;color:#000;">13</div>
<div class="a" style="left:394px;top:959px;width:24px;height:24px;background:#00a0ff"></div>
<div class="t" style="left:394.0px;width:24px;text-align:center;top:963.7px;font-size:13px;color:#fff;">14</div>
<div class="a" style="left:421px;top:959px;width:24px;height:24px;background:#a000a0"></div>
<div class="t" style="left:421.0px;width:24px;text-align:center;top:963.7px;font-size:13px;color:#fff;">15</div>
<div class="a" style="left:448px;top:959px;width:24px;height:24px;background:#808080"></div>
<div class="t" style="left:448.0px;width:24px;text-align:center;top:963.7px;font-size:13px;color:#fff;">16</div>
<div class="a" style="left:475px;top:959px;width:24px;height:24px;background:#7d87b9"></div>
<div class="t" style="left:475.0px;width:24px;text-align:center;top:963.7px;font-size:13px;color:#000;">17</div>
<div class="a" style="left:502px;top:959px;width:24px;height:24px;background:#bb7784"></div>
<div class="t" style="left:502.0px;width:24px;text-align:center;top:963.7px;font-size:13px;color:#000;">18</div>
<div class="a" style="left:529px;top:959px;width:24px;height:24px;background:#4a6fe3"></div>
<div class="t" style="left:529.0px;width:24px;text-align:center;top:963.7px;font-size:13px;color:#fff;">19</div>
<div class="a" style="left:556px;top:959px;width:24px;height:24px;background:#d33f6a"></div>
<div class="t" style="left:556.0px;width:24px;text-align:center;top:963.7px;font-size:13px;color:#fff;">20</div>
<div class="a" style="left:583px;top:959px;width:24px;height:24px;background:#8cd78c"></div>
<div class="t" style="left:583.0px;width:24px;text-align:center;top:963.7px;font-size:13px;color:#000;">21</div>
<div class="a" style="left:610px;top:959px;width:24px;height:24px;background:#f0b98d"></div>
<div class="t" style="left:610.0px;width:24px;text-align:center;top:963.7px;font-size:13px;color:#000;">22</div>
<div class="a" style="left:637px;top:959px;width:24px;height:24px;background:#f6c4e1"></div>
<div class="t" style="left:637.0px;width:24px;text-align:center;top:963.7px;font-size:13px;color:#000;">23</div>
<div class="a" style="left:664px;top:959px;width:24px;height:24px;background:#fa9ed4"></div>
<div class="t" style="left:664.0px;width:24px;text-align:center;top:963.7px;font-size:13px;color:#000;">24</div>
<div class="a" style="left:691px;top:959px;width:24px;height:24px;background:#500a78"></div>
<div class="t" style="left:691.0px;width:24px;text-align:center;top:963.7px;font-size:13px;color:#fff;">25</div>
<div class="a" style="left:718px;top:959px;width:24px;height:24px;background:#b45a00"></div>
<div class="t" style="left:718.0px;width:24px;text-align:center;top:963.7px;font-size:13px;color:#fff;">26</div>
<div class="a" style="left:745px;top:959px;width:24px;height:24px;background:#004754"></div>
<div class="t" style="left:745.0px;width:24px;text-align:center;top:963.7px;font-size:13px;color:#fff;">27</div>
<div class="a" style="left:772px;top:959px;width:24px;height:24px;background:#86fa88"></div>
<div class="t" style="left:772.0px;width:24px;text-align:center;top:963.7px;font-size:13px;color:#000;">28</div>
<div class="a" style="left:799px;top:959px;width:24px;height:24px;background:#ffdb66"></div>
<div class="t" style="left:799.0px;width:24px;text-align:center;top:963.7px;font-size:13px;color:#000;">29</div>
<div class="a" style="left:834px;top:959px;width:24px;height:24px;background:#f36926"></div>
<div class="t" style="left:834.0px;width:24px;text-align:center;top:963.7px;font-size:13px;color:#000;">T1</div>
<div class="a" style="left:861px;top:959px;width:24px;height:24px;background:#0ca0d9"></div>
<div class="t" style="left:861.0px;width:24px;text-align:center;top:963.7px;font-size:13px;color:#fff;">T2</div>
<div class="a" style="left:16px;top:983px;width:24px;height:2px;background:#3a3a3a"></div>
<div class="a" style="left:0px;top:988px;width:1920px;height:1px;background:#151515"></div>
<div class="a" style="left:0px;top:989px;width:1920px;height:1px;background:#6a6a6a"></div>
<div class="a" style="left:0px;top:990px;width:1920px;height:30px;background:#1e1e1e"></div>
<svg class="a" style="left:2px;top:1000px;" width="16" height="11" viewBox="0 0 16 11"><rect x="0" y="2" width="9" height="7" fill="#17d017"/><rect x="7" y="0" width="9" height="11" rx="3" fill="#e6e6e6"/></svg>
<div class="t" style="left:25.0px;top:998.9px;font-size:14.5px;color:#e8e8e8;">Move</div>
<svg class="a" style="left:77px;top:1000px;" width="16" height="11" viewBox="0 0 16 11"><rect x="0" y="2" width="9" height="7" fill="#17d017"/><rect x="7" y="0" width="9" height="11" rx="3" fill="#e6e6e6"/></svg>
<div class="t" style="left:100.0px;top:998.9px;font-size:14.5px;color:#e8e8e8;">Size</div>
<svg class="a" style="left:142px;top:1000px;" width="16" height="11" viewBox="0 0 16 11"><rect x="0" y="2" width="9" height="7" fill="#17d017"/><rect x="7" y="0" width="9" height="11" rx="3" fill="#e6e6e6"/></svg>
<div class="t" style="left:165.0px;top:998.9px;font-size:14.5px;color:#e8e8e8;">Rotate</div>
<svg class="a" style="left:224px;top:1000px;" width="16" height="11" viewBox="0 0 16 11"><rect x="0" y="2" width="9" height="7" fill="#17d017"/><rect x="7" y="0" width="9" height="11" rx="3" fill="#e6e6e6"/></svg>
<div class="t" style="left:247.0px;top:998.9px;font-size:14.5px;color:#e8e8e8;">Shear</div>
<div class="t" style="left:311.0px;top:998.9px;font-size:14.5px;color:#e8e8e8;">x: 41.40, y: 364.62 mm</div>
<div class="a" style="left:0px;top:1020px;width:1920px;height:60px;background:linear-gradient(90deg,#2a1a28 0%,#2b1a27 25%,#2e2119 45%,#2f2417 55%,#33201a 75%,#3a1d17 100%)"></div>
<div class="a" style="left:0px;top:1020px;width:1920px;height:1px;background:rgba(120,110,120,0.35)"></div>
<svg class="a" style="left:0px;top:1000px;" width="80" height="80" viewBox="0 0 80 80"><defs><linearGradient id="mg" x1="0" y1="0" x2="0" y2="1"><stop offset="0" stop-color="#f4c030"/><stop offset="1" stop-color="#ee7612"/></linearGradient></defs><path d="M27 54 C30 62 36 64.5 41 64 C50 63 55 57 55 48 C50 52 45 53.5 40 53.5 C35 54 30 54 27 54 Z" fill="url(#mg)"/></svg>
<div class="a" style="left:36px;top:1029px;width:30px;height:19px;background:#2a2a2a;border-radius:10px"></div>
<div class="t" style="left:36.0px;width:30px;text-align:center;top:1031.8px;font-size:13.5px;color:#ffffff;">51°</div>
<svg class="a" style="left:337px;top:1036px;" width="29" height="29" viewBox="0 0 29 29"><defs><linearGradient id="wg" x1="0" y1="0" x2="1" y2="1"><stop offset="0" stop-color="#7fd6fb"/><stop offset="1" stop-color="#1a9df0"/></linearGradient></defs><rect x="0" y="0" width="13.7" height="13.7" rx="1" fill="url(#wg)"/><rect x="15.3" y="0" width="13.7" height="13.7" rx="1" fill="url(#wg)"/><rect x="0" y="15.3" width="13.7" height="13.7" rx="1" fill="url(#wg)"/><rect x="15.3" y="15.3" width="13.7" height="13.7" rx="1" fill="url(#wg)"/></svg>
<div class="a" style="left:383px;top:1030px;width:276px;height:40px;background:rgba(255,240,240,0.13);border:1px solid rgba(255,255,255,0.08);border-radius:20px"></div>
<svg class="a" style="left:398px;top:1041px;" width="18" height="18" viewBox="0 0 18 18"><circle cx="7.5" cy="7.5" r="6" fill="none" stroke="#e0dada" stroke-width="1.8"/><path d="M12 12 L16.5 16.5" stroke="#e0dada" stroke-width="2" stroke-linecap="round"/></svg>
<div class="t" style="left:429.0px;top:1041.6px;font-size:17px;color:#ddd6d6;">Search</div>
<svg class="a" style="left:610px;top:1035px;" width="23" height="31" viewBox="0 0 23 31"><ellipse cx="11.5" cy="26" rx="11" ry="4.5" fill="#efe7d7"/><ellipse cx="11.5" cy="22" rx="10" ry="3.5" fill="#1f7de0"/><ellipse cx="11.5" cy="18" rx="8.5" ry="3.2" fill="#3cb84a"/><ellipse cx="11.5" cy="14" rx="7" ry="3" fill="#f4c21c"/><ellipse cx="11.5" cy="10" rx="5.5" ry="2.7" fill="#f08a1c"/><circle cx="11.5" cy="4.5" r="3.8" fill="#e23b2a"/></svg>
<svg class="a" style="left:672px;top:1036px;" width="32" height="29" viewBox="0 0 32 29"><rect x="0" y="9" width="21" height="20" rx="2" fill="#5d5d5d"/><rect x="10" y="0" width="22" height="20" rx="2" fill="#f2f2f2"/><rect x="10" y="9" width="11" height="11" fill="#9a9a9a"/></svg>
<svg class="a" style="left:728px;top:1035px;" width="31" height="30" viewBox="0 0 31 30"><rect x="8" y="2" width="22" height="26" rx="3" fill="#1490df"/><path d="M8 12 L30 12 V26 Q30 28 28 28 H10 Q8 28 8 26 Z" fill="#28a8ea"/><rect x="0" y="7" width="17" height="17" rx="2.5" fill="#0a64b8"/><ellipse cx="8.5" cy="15.5" rx="4.5" ry="5.2" fill="none" stroke="#fff" stroke-width="2.2"/></svg>
<div class="a" style="left:738px;top:1071px;width:10px;height:3px;background:#a8a0a0;border-radius:2px"></div>
<svg class="a" style="left:783px;top:1036px;" width="30" height="29" viewBox="0 0 30 29"><defs><linearGradient id="cp" x1="0" y1="0" x2="1" y2="1"><stop offset="0" stop-color="#2fb8f0"/><stop offset="0.5" stop-color="#9c5cf0"/><stop offset="1" stop-color="#f05a8a"/></linearGradient><linearGradient id="cp2" x1="0" y1="1" x2="1" y2="0"><stop offset="0" stop-color="#f0c020"/><stop offset="0.5" stop-color="#f07030"/><stop offset="1" stop-color="#e040a0"/></linearGradient></defs><path d="M8 2 Q4 2 3 7 L0 22 Q0 27 5 27 H12 Q16 27 17 22 L21 6 Q22 2 18 2 Z" fill="url(#cp)"/><path d="M12 29 Q16 29 17 24 L20 8 Q21 3 25 3 Q30 3 30 8 L27 23 Q26 29 21 29 Z" fill="url(#cp2)"/></svg>
<svg class="a" style="left:837px;top:1036px;" width="32" height="29" viewBox="0 0 32 29"><circle cx="19" cy="5" r="4.5" fill="#7b83eb"/><circle cx="27" cy="8" r="3.5" fill="#5059c9"/><rect x="22" y="12" width="10" height="13" rx="4" fill="#5059c9"/><path d="M10 11 H27 V22 Q27 29 18.5 29 Q10 29 10 22 Z" fill="#7b83eb"/><rect x="0" y="7" width="17" height="17" rx="2.5" fill="#4b53bc"/><path d="M4 11.5 H13 M8.5 11.5 V20" stroke="#fff" stroke-width="2.4"/></svg>
<svg class="a" style="left:892px;top:1036px;" width="33" height="29" viewBox="0 0 33 29"><path d="M1 3 Q1 1 3 1 H12 L15 4 H30 Q32 4 32 6 V10 H1 Z" fill="#e8a910"/><rect x="1" y="7" width="31" height="22" rx="2" fill="#ffd04a"/><rect x="8" y="21" width="17" height="4" rx="1" fill="#1a7fd8"/></svg>
<svg class="a" style="left:947px;top:1035px;" width="33" height="31" viewBox="0 0 33 31"><defs><linearGradient id="eg" x1="0" y1="0" x2="1" y2="1"><stop offset="0" stop-color="#35c1f1"/><stop offset="0.6" stop-color="#1b9de2"/><stop offset="1" stop-color="#0c59a4"/></linearGradient></defs><circle cx="16.5" cy="15.5" r="15" fill="url(#eg)"/><path d="M2 18 Q3 8 14 8 Q24 8 24 15 Q24 18 20 18 H11 Q12 24 19 24 Q24 24 27 21 Q24 30 14 30 Q2 29 2 18 Z" fill="#0c4f91"/><path d="M9 16 Q10 12 15 12 Q19 12 19 15 H9 Z" fill="#5fe070" opacity="0.7"/></svg>
<div class="a" style="left:958px;top:1071px;width:10px;height:3px;background:#a8a0a0;border-radius:2px"></div>
<svg class="a" style="left:1003px;top:1035px;" width="31" height="31" viewBox="0 0 31 31"><path d="M9 7 V4 Q9 1 12 1 H19 Q22 1 22 4 V7" fill="none" stroke="#2aa0f0" stroke-width="2"/><rect x="1" y="7" width="29" height="23" rx="3" fill="#f4f4f4"/><rect x="9" y="12" width="6" height="6" fill="#f25022"/><rect x="16" y="12" width="6" height="6" fill="#7fba00"/><rect x="9" y="19" width="6" height="6" fill="#00a4ef"/><rect x="16" y="19" width="6" height="6" fill="#ffb900"/></svg>
<svg class="a" style="left:1058px;top:1035px;" width="31" height="31" viewBox="0 0 31 31"><rect x="0" y="0" width="31" height="31" fill="#2aa046"/><path d="M5 9 L14 6 L16 22 L7 25 Z" fill="#fff"/><path d="M11 6 H21 V23 H11 Z" fill="#fff" stroke="#2aa046" stroke-width="0.8"/><path d="M17 7 L26 9 L24 25 L15 23 Z" fill="#fff" stroke="#2aa046" stroke-width="0.8"/><circle cx="9" cy="14" r="1.8" fill="#d02020"/><circle cx="16" cy="13" r="1.8" fill="#222"/><circle cx="21" cy="15" r="1.8" fill="#d02020"/></svg>
<svg class="a" style="left:1113px;top:1035px;" width="31" height="31" viewBox="0 0 31 31"><path d="M4 10 H27 L25 22 L15.5 30 L6 22 Z" fill="#6a3a22"/><path d="M8 12 H23 L22 21 L15.5 27 L9 21 Z" fill="#b08050"/><rect x="2" y="6" width="27" height="7" fill="#3a1a10"/><text x="15.5" y="12" font-size="7" fill="#c8a060" text-anchor="middle" font-family="Liberation Serif">FORGE</text></svg>
<svg class="a" style="left:1168px;top:1036px;" width="31" height="29" viewBox="0 0 31 29"><g stroke="#ffc220" stroke-width="2.6" stroke-linecap="round"><path d="M15.5 3 V8"/><path d="M15.5 15 V20"/><path d="M9.5 6.5 L13.5 9"/><path d="M21.5 6.5 L17.5 9"/><path d="M9.5 16.5 L13.5 14"/><path d="M21.5 16.5 L17.5 14"/></g><rect x="6" y="23" width="19" height="3" fill="#1a6fd0" opacity="0.8"/></svg>
<svg class="a" style="left:1223px;top:1035px;" width="32" height="31" viewBox="0 0 32 31"><rect x="0" y="0" width="32" height="31" rx="4" fill="#1f3fb0"/><path d="M6 21 L10 9 H25 L22 21 Z" fill="#e8eefc"/><path d="M4 20 H28" stroke="#fff" stroke-width="2"/><path d="M6 24 H26" stroke="#6aa0f0" stroke-width="2"/></svg>
<svg class="a" style="left:1278px;top:1035px;" width="31" height="31" viewBox="0 0 31 31"><circle cx="15.5" cy="15.5" r="15" fill="#db4437"/><path d="M15.5 15.5 L2.5 23 A15 15 0 0 1 2.5 8 Z" fill="#0f9d58"/><path d="M15.5 15.5 L2.5 23 A15 15 0 0 0 28.5 23 Z" fill="#0f9d58"/><path d="M15.5 15.5 L28.5 8 A15 15 0 0 1 15.5 30.5 L2.5 23 Z" fill="#ffcd40"/><path d="M15.5 0.5 A15 15 0 0 1 28.5 8 L15.5 15.5 Z" fill="#db4437"/><circle cx="15.5" cy="15.5" r="7" fill="#fff"/><circle cx="15.5" cy="15.5" r="5.5" fill="#4285f4"/></svg>
<svg class="a" style="left:1333px;top:1035px;" width="31" height="31" viewBox="0 0 31 31"><circle cx="17" cy="14" r="11" fill="none" stroke="#e8e8e8" stroke-width="5"/><path d="M17 3 A11 11 0 0 1 28 14" fill="none" stroke="#e23030" stroke-width="5"/><path d="M6 14 A11 11 0 0 0 17 25" fill="none" stroke="#404040" stroke-width="5"/><path d="M1 30 L9 22" stroke="#404040" stroke-width="3"/></svg>
<svg class="a" style="left:1389px;top:1036px;" width="27" height="28" viewBox="0 0 27 28"><rect x="0" y="0" width="27" height="28" rx="2" fill="#f9d21c"/><path d="M13 28 L27 14 V26 Q27 28 25 28 Z" fill="#333"/><path d="M13 28 L27 14 H16 Q13 14 13 17 Z" fill="#e8b010"/></svg>
<svg class="a" style="left:1449px;top:1035px;" width="18" height="31" viewBox="0 0 18 31"><rect x="2" y="0" width="14" height="20" rx="5" fill="#9a9aa0"/><rect x="2" y="0" width="14" height="9" rx="5" fill="#c0c0c8"/><circle cx="9" cy="11" r="2.2" fill="#e0502a"/><path d="M9 20 V27 M3 29 H15" stroke="#9a9aa0" stroke-width="2"/></svg>
<svg class="a" style="left:1498px;top:1035px;" width="31" height="28" viewBox="0 0 31 28"><rect x="0" y="0" width="31" height="28" rx="2" fill="#3aa8e8"/><rect x="2" y="2" width="27" height="21" fill="#d8f0fc"/><path d="M9 6 A5 5 0 1 0 14 11 H9 Z" fill="#f08a1c"/><circle cx="22" cy="7" r="2" fill="#1f7de0"/><circle cx="22" cy="14" r="2" fill="#1f7de0"/><path d="M16 10 H20 M16 10 L20 7 M16 10 L20 14" stroke="#1f7de0" stroke-width="1"/><path d="M5 19 H26" stroke="#f08a1c" stroke-width="1.5"/></svg>
<div class="a" style="left:1509px;top:1071px;width:8px;height:3px;background:#a8a0a0;border-radius:2px"></div>
<div class="a" style="left:1543px;top:1025px;width:50px;height:50px;background:rgba(255,255,255,0.07);border:1px solid rgba(255,255,255,0.05);border-radius:5px"></div>
<svg class="a" style="left:1553px;top:1035px;" width="30" height="30" viewBox="0 0 30 30"><defs><linearGradient id="lb" x1="0" y1="0" x2="1" y2="1"><stop offset="0" stop-color="#5a0a10"/><stop offset="1" stop-color="#e8202a"/></linearGradient></defs><rect x="0" y="0" width="30" height="30" rx="2" fill="url(#lb)"/><path d="M3 11 Q14 2 25 9" fill="none" stroke="#fff" stroke-width="2.2"/><path d="M22 6 L27 10 L21 11 Z" fill="#fff"/><path d="M5 25 L9 19 L8 16 L13 14 L17 16 Q23 17 23 26 L20 27 Q19 22 15 21 L12 24 Z" fill="#fff"/></svg>
<div class="a" style="left:1558px;top:1071px;width:21px;height:3px;background:#e8a8e8;border-radius:2px"></div>
<svg class="a" style="left:1689px;top:1046px;" width="13" height="8" viewBox="0 0 13 8"><path d="M1 7 L6.5 1.5 L12 7" fill="none" stroke="#fff" stroke-width="1.6"/></svg>
<svg class="a" style="left:1727px;top:1043px;" width="19" height="15" viewBox="0 0 19 15"><path d="M1 5.5 Q9.5 -2 18 5.5" fill="none" stroke="#fff" stroke-width="1.6"/><path d="M4 8.5 Q9.5 3.5 15 8.5" fill="none" stroke="#fff" stroke-width="1.6"/><path d="M6.8 11.3 Q9.5 9 12.2 11.3" fill="none" stroke="#fff" stroke-width="1.6"/><circle cx="9.5" cy="13.5" r="1.3" fill="#fff"/></svg>
<svg class="a" style="left:1755px;top:1042px;" width="21" height="16" viewBox="0 0 21 16"><path d="M1 5 H4.5 L9.5 1 V15 L4.5 11 H1 Z" fill="none" stroke="#fff" stroke-width="1.4" stroke-linejoin="round"/><path d="M12.5 5 Q14.5 8 12.5 11" fill="none" stroke="#fff" stroke-width="1.4"/><path d="M15 3 Q18.5 8 15 13" fill="none" stroke="#fff" stroke-width="1.4"/><path d="M17.5 1 Q22 8 17.5 15" fill="none" stroke="#777" stroke-width="1.2"/></svg>
<svg class="a" style="left:1786px;top:1044px;" width="21" height="13" viewBox="0 0 21 13"><rect x="0.8" y="0.8" width="17" height="11.4" rx="2.5" fill="none" stroke="#fff" stroke-width="1.5"/><rect x="3" y="3" width="8" height="7" rx="1" fill="#fff"/><rect x="18.5" y="4" width="2" height="5" rx="0.8" fill="#fff"/></svg>
<div class="t" style="right:24.0px;top:1031.4px;font-size:15px;color:#ffffff;">12:43 AM</div>
<div class="t" style="right:24.0px;top:1052.4px;font-size:15px;color:#ffffff;">8/31/2025</div>
</body></html>
